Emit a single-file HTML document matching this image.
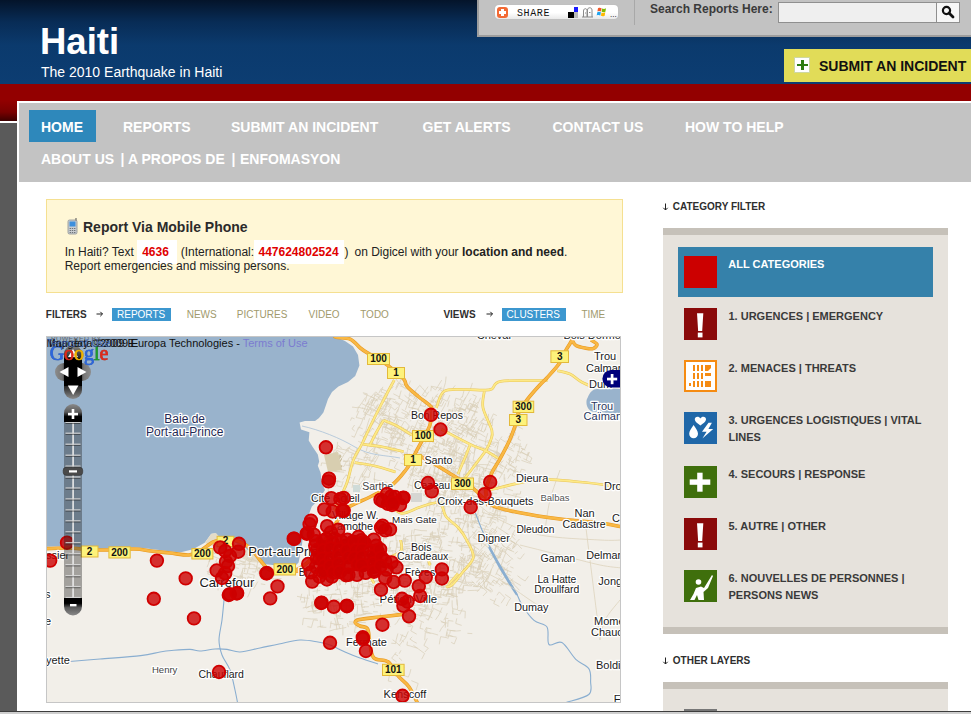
<!DOCTYPE html>
<html><head><meta charset="utf-8"><style>
html,body{margin:0;padding:0;width:971px;height:714px;overflow:hidden;background:#fff;}
.t{position:absolute;white-space:nowrap;font-family:"Liberation Sans",sans-serif;line-height:normal;}
.r{position:absolute;}
</style></head><body>
<div class="r" style="left:0px;top:0px;width:971px;height:84px;background:linear-gradient(to bottom,#04142a 0px,#082c56 22px,#0b3a6d 45px,#0c3d72 84px);"></div>
<div class="r" style="left:0px;top:84px;width:971px;height:37px;background:linear-gradient(to bottom,#930000 0px,#930000 16px,#7a0000 28px,#3c0000 37px);"></div>
<div class="r" style="left:0px;top:121px;width:17px;height:2px;background:#fff;"></div>
<div class="r" style="left:0px;top:123px;width:17px;height:588px;background:#5a5a5a;"></div>
<div class="t " style="left:40.0px;top:21.0px;font-size:36.5px;color:#fff;font-weight:bold;">Haiti</div>
<div class="t " style="left:41.0px;top:63.5px;font-size:14px;color:#fff;">The 2010 Earthquake in Haiti</div>
<div class="r" style="left:477px;top:0px;width:494px;height:37px;background:#c2c2c2;border-left:2px solid #9d9d9d;border-bottom:2px solid #9d9d9d;box-sizing:border-box;"></div>
<div class="r" style="left:495px;top:5px;width:123px;height:14px;background:linear-gradient(#fff 0%,#fff 55%,#e9e9e9 100%);border-radius:4px;box-shadow:0 0 1px #aaa;"></div>
<div class="r" style="left:497px;top:7px;width:11px;height:11px;background:#f26a35;border-radius:3px;"></div>
<div class="r" style="left:501px;top:9px;width:3px;height:7px;background:#fff"></div>
<div class="r" style="left:499px;top:11px;width:7px;height:3px;background:#fff"></div>
<div class="t " style="left:517.0px;top:8.2px;font-size:10px;color:#111;font-family:'Liberation Mono';letter-spacing:0.6px;">SHARE</div>
<div class="r" style="left:568px;top:12px;width:6px;height:6px;background:#000;"></div>
<div class="r" style="left:574px;top:7px;width:4px;height:5px;background:#1b1bff;"></div>
<div class="r" style="left:574px;top:12px;width:4px;height:6px;background:#bbb;"></div>
<svg class="r" style="left:581px;top:6px" width="13" height="12" viewBox="0 0 13 12"><path d="M2.5,11 V5 C2.5,2 6,2 6,4.5 V11 M6.5,11 V4 C6.5,1 11,1 11,4 V11 M1,11 H12 M4,7 H5 M8,6.5 H9.5" fill="none" stroke="#8a8a8a" stroke-width="1"/></svg><svg class="r" style="left:596px;top:6px" width="12" height="12" viewBox="0 0 12 12"><path d="M2,2.2 C3.5,1.4 4.5,1.6 5.6,2.2 L5,5.6 C3.9,5 2.9,4.8 1.4,5.6Z" fill="#f0582a"/><path d="M6.2,2.4 C7.3,3 8.4,3.1 10,2.3 L9.4,5.7 C7.9,6.5 6.8,6.3 5.6,5.8Z" fill="#7fba00"/><path d="M1.3,6.2 C2.8,5.4 3.8,5.6 4.9,6.2 L4.3,9.6 C3.2,9 2.2,8.8 0.7,9.6Z" fill="#22a4ef"/><path d="M5.5,6.4 C6.6,7 7.7,7.1 9.3,6.3 L8.7,9.7 C7.2,10.5 6.1,10.3 4.9,9.8Z" fill="#ffb900"/></svg><div class="t " style="left:610.0px;top:9.8px;font-size:8px;color:#000;">...</div>
<div class="r" style="left:634px;top:0px;width:1px;height:25px;background:#a8a8a8;"></div>
<div class="t " style="left:650.0px;top:2.1px;font-size:12px;color:#3a3a3a;font-weight:bold;">Search Reports Here:</div>
<div class="r" style="left:778px;top:2px;width:159px;height:21px;background:#efefef;border:1px solid #8f8f8f;box-sizing:border-box;"></div>
<div class="r" style="left:936px;top:2px;width:24px;height:21px;background:#f7f7f7;border:1px solid #8f8f8f;box-sizing:border-box;"></div>
<svg class="r" style="left:941px;top:5px" width="14" height="14" viewBox="0 0 14 14"><circle cx="5.5" cy="5.5" r="3.6" fill="none" stroke="#111" stroke-width="2.2"/><path d="M8 8 L12 12" stroke="#111" stroke-width="2.8" stroke-linecap="round"/></svg>
<div class="r" style="left:784px;top:49px;width:187px;height:33px;background:#e1dc58;"></div>
<div class="r" style="left:794px;top:57px;width:16px;height:16px;background:#fff;box-shadow:0 0 0 1px #cfd8a0 inset;"></div>
<div class="r" style="left:801.3px;top:60px;width:2.4px;height:10px;background:#2e7d12;"></div>
<div class="r" style="left:797px;top:63.8px;width:11px;height:2.4px;background:#2e7d12;"></div>
<div class="t " style="left:819.0px;top:58.0px;font-size:14px;color:#111;font-weight:bold;">SUBMIT AN INCIDENT</div>
<div class="r" style="left:17px;top:101px;width:954px;height:610px;background:#fff;"></div>
<div class="r" style="left:19px;top:103px;width:952px;height:79px;background:#c3c3c3;"></div>
<div class="r" style="left:29px;top:110px;width:67px;height:32px;background:#2e88bb;"></div>
<div class="t " style="left:41.0px;top:119.3px;font-size:14px;color:#fff;font-weight:bold;">HOME</div>
<div class="t " style="left:123.0px;top:119.3px;font-size:14px;color:#fff;font-weight:bold;">REPORTS</div>
<div class="t " style="left:231.0px;top:119.3px;font-size:14px;color:#fff;font-weight:bold;">SUBMIT AN INCIDENT</div>
<div class="t " style="left:422.5px;top:119.3px;font-size:14px;color:#fff;font-weight:bold;">GET ALERTS</div>
<div class="t " style="left:552.5px;top:119.3px;font-size:14px;color:#fff;font-weight:bold;">CONTACT US</div>
<div class="t " style="left:685.0px;top:119.3px;font-size:14px;color:#fff;font-weight:bold;">HOW TO HELP</div>
<div class="t " style="left:41.0px;top:151.3px;font-size:14px;color:#fff;font-weight:bold;transform-origin:left;">ABOUT US</div>
<div class="t " style="left:120.5px;top:151.3px;font-size:14px;color:#fff;font-weight:bold;transform-origin:left;">|</div>
<div class="t " style="left:128.0px;top:151.3px;font-size:14px;color:#fff;font-weight:bold;transform-origin:left;">A PROPOS DE</div>
<div class="t " style="left:231.5px;top:151.3px;font-size:14px;color:#fff;font-weight:bold;transform-origin:left;">|</div>
<div class="t " style="left:240.0px;top:151.3px;font-size:14px;color:#fff;font-weight:bold;transform-origin:left;">ENFOMASYON</div>
<div class="r" style="left:46px;top:199px;width:577px;height:94px;background:#fff7d6;border:1px solid #f5e091;box-sizing:border-box;"></div>
<svg class="r" style="left:66px;top:218px" width="13" height="17" viewBox="0 0 13 17"><rect x="2" y="2" width="9" height="14" rx="1.5" fill="#c9cdd0" stroke="#8b9096" stroke-width="0.8"/><rect x="3.5" y="3.5" width="6" height="5" fill="#3d8fdc"/><g fill="#6f757b"><rect x="3.6" y="10" width="1.4" height="1"/><rect x="5.8" y="10" width="1.4" height="1"/><rect x="8" y="10" width="1.4" height="1"/><rect x="3.6" y="12" width="1.4" height="1"/><rect x="5.8" y="12" width="1.4" height="1"/><rect x="8" y="12" width="1.4" height="1"/><rect x="3.6" y="14" width="1.4" height="1"/><rect x="5.8" y="14" width="1.4" height="1"/><rect x="8" y="14" width="1.4" height="1"/></g><rect x="9.5" y="0" width="1" height="2.5" fill="#555"/></svg>
<div class="t " style="left:83.0px;top:218.9px;font-size:14px;color:#2b2b2b;font-weight:bold;">Report Via Mobile Phone</div>
<div class="r" style="left:137px;top:240px;width:40px;height:24px;background:#fff;"></div>
<div class="r" style="left:254px;top:240px;width:90px;height:24px;background:#fff;"></div>
<div class="t " style="left:64.7px;top:244.7px;font-size:12px;color:#222;">In Haiti? Text</div>
<div class="t " style="left:142.2px;top:244.7px;font-size:12px;color:#e00000;font-weight:bold;">4636</div>
<div class="t " style="left:180.7px;top:244.7px;font-size:12px;color:#222;">(International:</div>
<div class="t " style="left:258.5px;top:244.7px;font-size:12px;color:#e00000;font-weight:bold;">447624802524</div>
<div class="t " style="left:344.5px;top:244.7px;font-size:12px;color:#222;">)</div>
<div class="t " style="left:354.5px;top:244.7px;font-size:12px;color:#222;">on Digicel with your</div>
<div class="t " style="left:462.0px;top:244.7px;font-size:12px;color:#222;font-weight:bold;">location and need</div>
<div class="t " style="left:564.0px;top:244.7px;font-size:12px;color:#222;">.</div>
<div class="t " style="left:64.7px;top:259.2px;font-size:12px;color:#222;">Report emergencies and missing persons.</div>
<div class="t " style="left:45.8px;top:309.1px;font-size:10px;color:#2e2e2e;font-weight:bold;">FILTERS</div>
<svg class="r" style="left:94px;top:309px" width="10" height="10"><path d="M2.5,5 H8.5 M6.3,2.8 L8.5,5 L6.3,7.2" fill="none" stroke="#222" stroke-width="1"/></svg><div class="r" style="left:112px;top:308px;width:59px;height:13px;background:#3c97cf;"></div>
<div class="t " style="left:117.0px;top:309.1px;font-size:10px;color:#fff;">REPORTS</div>
<div class="t " style="left:186.7px;top:309.1px;font-size:10px;color:#a19a6c;">NEWS</div>
<div class="t " style="left:236.8px;top:309.1px;font-size:10px;color:#a19a6c;">PICTURES</div>
<div class="t " style="left:308.5px;top:309.1px;font-size:10px;color:#a19a6c;">VIDEO</div>
<div class="t " style="left:360.2px;top:309.1px;font-size:10px;color:#a19a6c;">TODO</div>
<div class="t " style="left:443.4px;top:309.1px;font-size:10px;color:#2e2e2e;font-weight:bold;">VIEWS</div>
<svg class="r" style="left:484px;top:309px" width="10" height="10"><path d="M2.5,5 H8.5 M6.3,2.8 L8.5,5 L6.3,7.2" fill="none" stroke="#222" stroke-width="1"/></svg><div class="r" style="left:502px;top:308px;width:64px;height:13px;background:#3c97cf;"></div>
<div class="t " style="left:506.6px;top:309.1px;font-size:10px;color:#fff;">CLUSTERS</div>
<div class="t " style="left:581.4px;top:309.1px;font-size:10px;color:#a19a6c;">TIME</div>
<svg class="r" style="left:660px;top:200px" width="10" height="12"><path d="M5.5,3.5 V10 M3.3,7.8 L5.5,10 L7.7,7.8" fill="none" stroke="#222" stroke-width="1"/></svg><div class="t " style="left:672.8px;top:201.0px;font-size:10px;color:#2e2e2e;font-weight:bold;">CATEGORY FILTER</div>
<div class="r" style="left:663px;top:228px;width:285px;height:406px;background:#e6e2dc;"></div>
<div class="r" style="left:663px;top:228px;width:285px;height:7px;background:#c6c1b9;"></div>
<div class="r" style="left:663px;top:627px;width:285px;height:7px;background:#c6c1b9;"></div>
<div class="r" style="left:678px;top:247px;width:255px;height:50px;background:#3581aa;"></div>
<div class="r" style="left:684px;top:256px;width:33px;height:32px;background:#cc0000;"></div>
<div class="t " style="left:728.3px;top:258.0px;font-size:11px;color:#fff;font-weight:bold;">ALL CATEGORIES</div>
<div class="r" style="left:684px;top:308px;width:33px;height:32px;background:#8a0a0a"><svg width="33" height="32" viewBox="0 0 33 32"><path d="M13,5.3 L19.3,5.3 L18.2,23 L14.1,23Z" fill="#fff"/><rect x="13.8" y="24.6" width="4.7" height="4.8" fill="#fff"/></svg></div>
<div class="t " style="left:728.5px;top:310.2px;font-size:11px;color:#3a3a3a;font-weight:bold;">1. URGENCES | EMERGENCY</div>
<div class="r" style="left:684px;top:360px;width:33px;height:32px;background:#f58b12"><svg width="33" height="32" viewBox="0 0 33 32"><rect x="2" y="2" width="29" height="28" fill="#fff"/><g fill="#f58b12"><rect x="9" y="5" width="2" height="6"/><rect x="13" y="5" width="2" height="6"/><rect x="17" y="5" width="2" height="6"/><path d="M21 5h6v3l-3 3h-3z"/><rect x="9" y="13" width="2" height="6"/><rect x="13" y="13" width="2" height="6"/><rect x="17" y="13" width="2" height="6"/><path d="M21 13h6v3h-6z"/><rect x="5" y="23" width="2" height="3"/><rect x="9" y="21" width="2" height="6"/><rect x="13" y="21" width="2" height="6"/><rect x="17" y="21" width="2" height="6"/><path d="M21 21h6v6h-6z"/></g></svg></div>
<div class="t " style="left:728.5px;top:362.2px;font-size:11px;color:#3a3a3a;font-weight:bold;">2. MENACES | THREATS</div>
<div class="r" style="left:684px;top:412px;width:33px;height:32px;background:#1f67a8"><svg width="33" height="32" viewBox="0 0 33 32"><path d="M16.4 6.5c-1.5-3-6-2.2-5.6 1.2c0.3 2.2 3 3.8 5.6 5.8c2.6-2 5.3-3.6 5.6-5.8c0.4-3.4-4.1-4.2-5.6-1.2z" fill="#fff"/><path d="M9.6 13c-2.4 3.6-4.4 6.3-4.4 8.8a4.4 4.4 0 0 0 8.8 0c0-2.5-2-5.2-4.4-8.8z" fill="#fff"/><path d="M24.5 10.8l-6.5 9h4.6l-4.2 6.7l10.8-9.6h-4.8l3.5-6.1z" fill="#fff"/></svg></div>
<div class="t " style="left:728.5px;top:414.2px;font-size:11px;color:#3a3a3a;font-weight:bold;">3. URGENCES LOGISTIQUES | VITAL</div>
<div class="t " style="left:728.5px;top:430.8px;font-size:11px;color:#3a3a3a;font-weight:bold;">LINES</div>
<div class="r" style="left:684px;top:466px;width:33px;height:32px;background:#3f6f0c"><svg width="33" height="32" viewBox="0 0 33 32"><rect x="13.2" y="6.7" width="5.4" height="19" fill="#fff"/><rect x="5.7" y="13.4" width="20.6" height="5.4" fill="#fff"/></svg></div>
<div class="t " style="left:728.5px;top:468.2px;font-size:11px;color:#3a3a3a;font-weight:bold;">4. SECOURS | RESPONSE</div>
<div class="r" style="left:684px;top:518px;width:33px;height:32px;background:#8a0a0a"><svg width="33" height="32" viewBox="0 0 33 32"><path d="M13,5.3 L19.3,5.3 L18.2,23 L14.1,23Z" fill="#fff"/><rect x="13.8" y="24.6" width="4.7" height="4.8" fill="#fff"/></svg></div>
<div class="t " style="left:728.5px;top:520.2px;font-size:11px;color:#3a3a3a;font-weight:bold;">5. AUTRE | OTHER</div>
<div class="r" style="left:684px;top:570px;width:33px;height:32px;background:#3f6f0c"><svg width="33" height="32" viewBox="0 0 33 32"><path d="M28 5l-8 13l-3-1.5l-5 1.5l-2.5 6l-3.5 6h4.5l2.5-5l1.5 5h5.5l-0.5-8l4.5-4l5-12z" fill="#fff"/><circle cx="14.5" cy="12" r="2.8" fill="#fff"/></svg></div>
<div class="t " style="left:728.5px;top:572.2px;font-size:11px;color:#3a3a3a;font-weight:bold;">6. NOUVELLES DE PERSONNES |</div>
<div class="t " style="left:728.5px;top:588.8px;font-size:11px;color:#3a3a3a;font-weight:bold;">PERSONS NEWS</div>
<svg class="r" style="left:660px;top:654px" width="10" height="12"><path d="M5.5,3.5 V10 M3.3,7.8 L5.5,10 L7.7,7.8" fill="none" stroke="#222" stroke-width="1"/></svg><div class="t " style="left:672.8px;top:654.8px;font-size:10px;color:#2e2e2e;font-weight:bold;">OTHER LAYERS</div>
<div class="r" style="left:663px;top:682px;width:285px;height:29px;background:#e6e2dc;"></div>
<div class="r" style="left:663px;top:682px;width:285px;height:7px;background:#c6c1b9;"></div>
<div class="r" style="left:684px;top:709px;width:33px;height:2px;background:#777;"></div>
<div class="r" style="left:0px;top:711px;width:971px;height:1px;background:#3d3d3d;"></div>
<div class="r" style="left:0px;top:712px;width:971px;height:2px;background:#cfcfcf;"></div>
<div class="r" style="left:46px;top:336px;width:575px;height:367px;overflow:hidden;background:#f2efe9;"><svg width="575" height="367" viewBox="0 0 575 367" style="position:absolute;left:0;top:0;font-family:'Liberation Sans',sans-serif">
<g transform="translate(-46,-336)">
<path d="M40.0,330.0 L334.0,330.0 L334.0,336.0 L345.0,341.0 L353.0,346.5 L358.0,355.0 L359.4,365.4 L355.2,376.0 L348.0,382.0 L338.4,386.4 L332.0,392.0 L328.0,399.0 L326.0,405.0 L323.4,412.6 L319.0,418.0 L315.0,421.0 L305.0,421.0 L299.6,422.4 L301.0,429.4 L309.4,432.2 L308.7,440.6 L312.2,446.2 L317.8,454.6 L319.2,461.6 L317.8,465.8 L320.6,472.8 L322.0,484.0 L325.0,490.0 L318.4,500.0 L311.8,506.5 L306.9,519.7 L303.0,535.0 L302.0,544.4 L298.6,562.5 L295.3,565.8 L272.3,565.0 L264.0,564.0 L254.0,559.2 L246.0,548.5 L232.0,541.0 L218.0,537.8 L215.4,533.2 L211.3,533.7 L204.7,542.7 L193.0,549.3 L180.0,552.6 L151.0,549.0 L134.0,547.0 L98.5,549.0 L79.6,547.0 L67.0,546.0 L40.0,547.0Z" fill="#99b3cc"/>
<path d="M594,389.5 C602,388 612,388.5 622,389 L622,413.5 C612,413 600,413 592,411.5 C586,409 585.5,401 587.5,398 C589,394 591,391 594,389.5Z" fill="#99b3cc"/>
<path d="M205,543 L211,534 L216,533 L222,540 L240,545 L255,555 L262,563 L250,562 L235,555 L220,549Z" fill="#e4dcc8"/>
<mask id="landmask"><rect x="0" y="0" width="1000" height="1000" fill="#fff"/><path d="M40.0,330.0 L334.0,330.0 L334.0,336.0 L345.0,341.0 L353.0,346.5 L358.0,355.0 L359.4,365.4 L355.2,376.0 L348.0,382.0 L338.4,386.4 L332.0,392.0 L328.0,399.0 L326.0,405.0 L323.4,412.6 L319.0,418.0 L315.0,421.0 L305.0,421.0 L299.6,422.4 L301.0,429.4 L309.4,432.2 L308.7,440.6 L312.2,446.2 L317.8,454.6 L319.2,461.6 L317.8,465.8 L320.6,472.8 L322.0,484.0 L325.0,490.0 L318.4,500.0 L311.8,506.5 L306.9,519.7 L303.0,535.0 L302.0,544.4 L298.6,562.5 L295.3,565.8 L272.3,565.0 L264.0,564.0 L254.0,559.2 L246.0,548.5 L232.0,541.0 L218.0,537.8 L215.4,533.2 L211.3,533.7 L204.7,542.7 L193.0,549.3 L180.0,552.6 L151.0,549.0 L134.0,547.0 L98.5,549.0 L79.6,547.0 L67.0,546.0 L40.0,547.0Z" fill="#000"/></mask>
<path mask="url(#landmask)" d="M443.2,443.5 L446.6,444.3 L450.4,445.9 L453.5,447.1M404.4,421.1 L400.6,427.8 L404.5,429.2 L408.1,430.1M398.3,397.8 L401.8,399.6 L404.7,401.2 L409.3,404.1M462.3,412.4 L456.2,410.1M381.7,425.7 L376.6,422.4 L371.9,420.4M467.5,431.8 L473.3,435.6 L470.9,439.8 L475.4,442.5M395.2,401.4 L400.5,404.7 L402.8,400.3M443.4,448.7 L449.6,451.6M458.3,412.4 L459.4,407.5 L466.0,410.3M391.5,388.8 L393.6,386.1M386.3,426.8 L385.1,430.4M447.9,441.0 L454.2,443.9 L456.1,439.3 L453.1,437.9M455.8,441.9 L459.5,442.8 L465.0,445.4 L470.0,448.7M365.2,401.6 L367.3,393.9 L362.9,392.7M416.2,448.3 L412.8,455.3M470.8,430.0 L465.8,425.9M378.9,455.0 L376.8,459.2 L373.4,465.2 L369.2,470.9M414.1,397.1 L417.7,399.5 L413.5,406.0M427.8,448.7 L426.1,452.4 L423.5,458.1M401.5,433.9 L399.3,438.6M408.0,386.7 L410.6,380.6M410.2,421.4 L413.7,416.4M380.5,417.9 L379.2,424.0 L377.8,431.2 L377.8,435.3M381.6,418.7 L380.5,423.4 L387.3,425.4 L390.3,418.7M470.3,428.4 L472.0,425.9 L474.3,421.1 L476.5,417.0M398.8,420.2 L396.8,426.7M472.0,406.8 L474.2,401.1 L476.4,396.4 L472.6,394.6M439.4,461.1 L440.7,456.3M450.8,433.7 L444.4,429.4M484.4,417.4 L481.7,421.6M429.4,457.2 L432.4,453.6 L434.5,450.9M371.5,435.9 L377.2,438.2 L384.5,440.0 L387.7,441.5M447.8,459.6 L443.7,465.4 L438.9,462.3 L436.8,465.1M443.7,414.5 L441.0,412.4 L444.5,406.0 L446.0,402.7M466.6,411.8 L461.7,409.0M414.9,464.3 L413.0,470.1 L411.9,475.5M482.7,423.8 L488.1,424.9 L492.3,425.8 L492.7,418.7M459.6,406.0 L455.5,403.5M458.9,432.9 L457.5,439.5 L454.3,438.9 L452.2,444.9M475.9,434.3 L475.1,437.2 L468.1,433.7M394.9,461.6 L390.2,460.2 L388.9,466.3M419.6,427.8 L422.7,428.7 L428.7,429.8 L434.2,431.1M462.9,401.7 L467.3,395.1 L470.2,389.7 L472.4,382.9M460.4,452.7 L466.1,456.7 L469.0,458.1 L466.2,462.0M381.1,402.4 L378.8,407.2M371.6,418.8 L375.1,421.1 L378.3,423.8M365.3,433.0 L366.4,428.6 L368.1,422.7 L369.6,418.3M394.6,426.6 L395.7,423.3 L397.5,419.2 L402.4,421.2M400.4,452.4 L403.9,455.2M354.6,437.3 L351.5,436.0M468.5,416.5 L465.8,421.4 L463.5,424.9 L466.8,426.8M413.6,399.8 L414.9,396.4 L421.6,397.6M404.5,387.5 L399.8,385.9M412.8,450.8 L419.6,453.2M446.6,422.2 L449.6,416.0M377.1,398.6 L373.0,405.1M382.6,397.7 L379.3,396.1 L377.6,400.1 L370.7,396.3M386.0,427.1 L387.0,423.4 L388.8,416.6 L389.9,412.0M421.9,454.6 L420.3,458.9M460.1,405.4 L462.3,400.2 L455.8,398.2 L454.2,405.8M432.8,396.8 L431.6,401.6M435.4,404.5 L441.7,406.2 L444.1,401.3M450.8,390.8 L455.2,385.4M399.1,398.7 L399.8,395.8M379.0,394.6 L375.7,391.9 L373.2,394.5 L368.4,400.5M393.4,413.8 L397.3,415.8 L393.5,422.2M470.9,430.4 L472.6,427.6 L476.0,422.2M390.3,433.7 L384.1,431.7M464.0,426.1 L461.2,424.3 L458.1,427.6 L455.6,430.9M377.4,404.9 L376.0,407.8 L374.1,410.5 L371.5,413.1M391.5,430.3 L385.0,426.2M364.1,420.0 L365.6,413.5 L370.3,415.6 L374.6,416.5M358.9,410.9 L356.2,417.5 L362.6,418.9M443.5,460.9 L440.9,459.2 L438.1,464.7M432.1,427.9 L435.2,428.9 L433.9,433.4 L432.8,439.9M413.2,403.5 L416.7,404.3M419.7,449.9 L424.1,443.6M397.8,461.5 L394.3,467.9 L400.5,470.8M443.5,446.1 L444.7,440.9M456.1,441.0 L459.9,442.4M364.3,436.0 L362.7,441.9 L360.1,448.7M413.0,446.3 L409.0,444.7 L407.9,448.8 L406.4,456.1M464.0,423.8 L460.9,429.2M440.3,400.0 L444.8,394.1M450.0,422.1 L446.6,426.4 L444.0,429.9M380.6,403.9 L379.8,407.5 L378.5,410.4M366.7,444.6 L363.5,443.6 L358.2,441.3M387.9,394.4 L384.8,399.8M410.7,450.0 L406.5,448.2M421.0,419.6 L415.2,416.3 L411.3,413.0M367.3,445.1 L364.0,443.6M467.3,407.8 L473.2,410.9 L477.3,412.4M397.0,425.8 L394.2,433.2M384.3,401.4 L389.4,405.3 L394.9,410.1 L397.6,407.2M393.6,436.0 L392.2,439.5M422.5,395.0 L425.5,396.9 L428.8,391.6M420.2,447.2 L423.0,442.4 L425.0,436.7M385.6,406.9 L388.5,402.8 L390.8,398.2M392.6,401.3 L399.2,405.1M467.2,434.6 L468.8,431.9M443.8,393.6 L442.6,397.9 L440.4,404.1M421.6,401.3 L420.1,405.4 L425.4,406.6 L425.9,402.3M425.6,432.0 L422.4,437.5 L428.8,440.2M429.7,418.1 L432.7,412.4 L434.8,407.1 L430.4,404.9M386.0,448.4 L391.6,450.9M401.5,451.7 L398.8,450.0 L393.4,447.2 L389.9,453.8M472.6,433.8 L477.0,434.7 L475.9,439.7M397.5,412.3 L399.6,404.9M463.3,435.5 L460.3,439.5 L458.1,437.1M377.3,406.8 L378.3,403.8M451.9,432.0 L458.0,433.3 L462.0,433.5 L462.7,429.7M475.3,423.8 L477.9,419.7M417.5,397.8 L418.7,393.6M478.9,407.9 L473.7,404.6 L469.2,410.8M473.1,401.2 L476.2,403.5M437.0,440.2 L432.6,438.8 L425.5,437.0M470.9,426.2 L474.8,427.9 L472.2,432.1 L470.2,435.4M440.6,419.4 L438.2,417.4 L432.9,414.1 L427.4,410.2M439.1,458.2 L445.3,462.8 L448.8,464.8 L455.6,467.3M407.1,455.9 L410.9,457.0 L410.1,461.2 L405.7,460.7M370.8,404.0 L374.7,398.6 L369.7,396.2 L363.6,393.8M363.2,408.6 L357.8,407.0M489.2,426.1 L490.9,419.3 L493.4,413.9 L496.8,415.6M437.0,441.6 L442.2,444.1 L446.4,446.4 L451.1,440.5M381.0,448.2 L375.8,446.4 L372.7,451.7 L378.3,453.9M442.4,443.9 L444.8,440.0 L438.8,436.6 L433.8,434.8M421.1,404.3 L417.5,409.9M434.9,446.3 L438.3,447.2 L438.8,443.5 L443.9,444.7M407.1,462.5 L409.2,457.9M386.6,404.1 L387.9,398.2 L383.7,398.1M387.7,400.5 L383.9,406.9 L380.4,412.0 L384.0,414.3M392.1,436.6 L390.4,441.7 L388.5,446.4M460.0,426.5 L461.9,424.0M477.6,412.1 L472.5,410.8 L467.3,408.9 L469.0,404.2M374.8,445.7 L378.8,448.2 L383.2,450.5 L388.1,451.8M369.6,409.1 L374.4,410.7 L381.2,414.5 L382.6,411.1M365.3,431.1 L362.6,435.1M383.8,418.5 L381.1,422.5 L378.8,426.8M362.7,428.8 L358.5,427.1 L356.3,432.8 L354.3,437.2M427.9,416.6 L423.2,413.4M428.5,425.4 L433.8,428.4 L436.8,430.8M442.5,416.1 L439.6,421.4 L435.6,427.7 L429.7,424.9M454.3,407.2 L461.1,409.5M403.4,427.0 L400.6,431.7M406.8,403.6 L409.2,399.4 L404.5,395.2M474.9,430.7 L481.0,434.3 L485.6,437.1M378.1,401.0 L373.4,399.8 L371.4,405.2 L370.1,409.7M403.1,460.1 L406.2,452.8 L411.4,456.3 L415.3,458.6M478.8,445.6 L485.7,448.5 L489.0,449.8 L496.4,451.5M369.0,400.4 L365.9,406.0 L363.4,411.8 L366.9,413.5M456.7,440.3 L463.1,442.9M449.4,428.7 L454.8,431.0 L459.9,433.3 L464.3,435.9M413.7,428.1 L411.3,433.3 L409.3,436.9M465.7,426.5 L468.8,429.1M418.2,419.8 L416.6,423.4 L414.1,429.6 L412.6,432.7M418.3,463.6 L421.1,465.4M388.4,411.8 L390.7,407.6 L387.3,405.8M381.4,401.6 L384.7,394.6 L387.8,395.8M479.3,428.3 L476.5,433.5 L473.7,439.3M457.3,425.2 L451.7,423.3M440.3,415.5 L438.2,421.5 L441.5,422.5 L443.0,418.8M406.7,430.9 L402.5,436.2 L405.3,438.3 L402.4,441.3M370.0,429.2 L369.0,432.6M377.0,442.3 L375.4,446.9 L374.0,452.0M389.6,450.6 L397.3,452.5M448.9,416.7 L442.6,413.9 L439.6,412.9M462.4,429.2 L467.1,431.7 L472.1,435.3 L474.8,437.5M473.9,416.3 L475.3,411.7M452.0,429.5 L446.1,424.9M423.4,416.5 L424.5,412.1M402.6,456.4 L405.5,451.9M395.5,426.7 L392.4,433.6M440.2,388.6 L438.1,391.2M395.3,429.9 L400.9,434.3 L404.7,437.1M454.6,449.8 L451.1,455.3M396.4,432.6 L394.8,438.2 L391.1,437.4M373.0,428.0 L369.1,432.7M466.9,449.9 L461.8,456.0 L459.2,458.3M433.9,411.0 L431.0,410.2 L432.4,405.2 L437.5,405.9M454.2,448.1 L451.3,453.9M468.9,401.7 L471.1,398.3M448.8,432.2 L452.1,427.7M462.3,397.4 L464.1,390.1 L457.9,389.4M377.2,452.0 L374.0,457.1 L370.4,463.9 L368.2,470.1M362.1,407.8 L369.4,410.4M423.8,419.0 L422.9,423.0M383.2,417.4 L389.8,418.8 L389.7,424.8 L396.2,424.9M429.3,436.1 L423.5,434.5 L423.9,430.9M424.8,443.9 L429.0,437.4M381.7,436.9 L388.0,439.6M406.2,389.2 L403.5,387.4 L398.1,381.9 L394.4,376.8M466.2,437.3 L467.2,434.3 L468.5,429.5 L461.8,427.3M414.5,456.9 L409.1,453.9M420.7,429.7 L425.1,431.3 L431.0,432.4M468.9,412.2 L470.9,405.1M416.8,404.1 L411.5,400.4 L408.4,397.9 L411.9,393.3M421.9,447.3 L420.5,452.0 L425.2,452.4 L429.8,452.6M400.4,463.1 L406.2,464.8M406.7,431.5 L408.8,426.2M456.4,450.2 L452.9,456.4 L449.1,462.0M382.5,401.6 L381.3,404.3M358.2,407.9 L362.5,401.9 L365.4,397.5M394.9,444.0 L398.4,437.9M382.7,420.0 L380.3,425.4 L377.9,429.3M391.7,433.1 L397.4,434.3 L398.1,428.7M350.5,420.6 L351.7,417.7 L354.5,418.8M404.5,433.9 L406.4,430.7 L409.9,426.5 L404.8,421.1M470.6,443.9 L463.9,441.4M395.6,389.8 L397.8,386.0 L399.7,382.5 L401.7,377.1M374.3,394.8 L380.3,398.4M465.1,410.2 L466.9,407.7 L469.6,402.9 L475.5,407.4M452.4,442.7 L450.9,445.9 L448.7,453.3 L454.2,455.8M369.0,409.3 L366.7,413.0 L365.2,416.1M384.7,442.7 L390.3,444.5 L396.1,446.2M396.1,416.7 L394.5,420.9 L389.8,418.1M411.4,400.5 L408.5,407.3 L415.6,408.9M436.3,447.1 L433.0,445.7 L430.9,451.6M356.9,412.3 L358.3,407.8 L352.0,407.1M443.6,439.3 L441.7,444.8M453.9,455.2 L449.3,453.7 L444.0,452.5M452.0,444.7 L446.8,441.9 L449.3,437.5M393.4,393.8 L399.4,396.9 L401.2,390.5M457.5,437.9 L454.9,441.7M442.7,389.0 L438.4,387.7 L431.4,386.2 L430.8,391.2M462.3,396.2 L460.4,398.7M416.8,418.9 L418.3,414.4 L419.0,410.9M433.6,427.0 L432.1,430.5 L429.5,436.0M386.6,425.3 L381.5,421.3 L384.2,418.9 L388.2,425.1M476.2,432.6 L469.8,430.6 L463.3,428.8M439.8,421.0 L442.4,415.1 L436.6,412.5M465.1,412.5 L463.7,415.4M425.5,409.1 L421.9,416.1M433.5,449.5 L427.2,447.7 L426.5,451.9 L432.7,452.0M369.8,407.4 L367.7,412.8M447.3,423.0 L451.0,417.7M449.5,431.7 L443.4,429.5M393.5,430.4 L390.4,429.3 L382.9,426.7 L381.8,433.2M375.2,436.2 L373.5,438.8 L369.8,443.6M419.7,413.8 L423.4,416.3M460.2,407.3 L458.4,414.2 L452.3,413.0 L453.0,408.2M453.0,432.1 L459.7,435.7 L464.3,429.5 L458.9,425.7M454.8,449.6 L453.1,455.6 L456.3,455.9M397.2,438.4 L401.4,441.4 L400.0,444.4 L402.7,446.2M472.4,404.4 L470.4,409.2M373.8,417.7 L376.8,410.8 L381.3,404.4 L383.4,401.9M385.6,415.6 L382.3,414.0 L385.0,408.5 L387.2,402.2M369.9,414.7 L372.0,409.3M452.7,421.3 L450.8,424.9M405.4,409.8 L406.7,405.9 L409.7,398.9M437.9,393.7 L434.7,398.1 L429.7,404.2 L425.8,409.2M389.7,427.7 L392.9,428.6 L396.1,428.9 L399.7,429.1M372.2,399.0 L368.8,405.5 L365.8,412.1 L363.9,415.1M388.4,447.7 L389.5,443.0 L396.3,444.7 L403.8,445.1M390.9,430.8 L392.3,425.5M391.6,419.2 L387.7,416.3 L384.3,413.7 L386.6,411.7M371.4,427.8 L374.2,429.7M395.8,388.2 L398.0,383.0 L401.8,384.3 L404.9,385.5M390.8,454.8 L392.5,450.5 L396.8,452.5M369.2,401.4 L366.8,405.1M376.7,456.2 L371.8,462.0M378.7,398.9 L385.2,401.5 L391.8,405.4M416.0,390.1 L413.6,396.2 L409.0,395.3 L411.4,388.8M483.0,424.2 L481.0,431.4M426.2,400.1 L424.0,404.0M391.3,399.6 L385.6,398.2M396.6,442.6 L398.5,437.8 L400.8,433.8 L402.5,429.9M424.6,456.6 L429.5,458.1 L426.8,463.8M431.5,431.9 L436.1,433.0 L440.4,433.2 L448.0,433.9M484.3,431.3 L487.0,424.9 L488.1,419.9 L488.5,413.9M461.2,415.7 L466.9,417.0 L466.6,423.0M422.3,430.3 L427.1,432.2 L432.5,434.7M441.4,396.0 L443.9,392.2 L439.9,389.5 L441.3,386.7M482.3,419.8 L479.1,423.6M459.8,447.0 L457.8,450.8M465.8,397.4 L462.7,403.6 L459.6,410.2M432.8,402.7 L433.9,399.3M374.1,443.6 L369.4,442.5 L366.9,448.1 L366.3,451.1M400.8,446.1 L404.5,439.7 L399.2,437.4M428.1,386.6 L426.2,389.4 L421.9,395.6M472.7,416.6 L469.3,423.0M362.9,438.1 L366.7,433.0 L370.2,426.3M417.6,409.5 L423.0,413.0 L428.3,416.2M487.8,433.1 L485.9,439.3 L485.0,445.2 L491.4,446.7M448.5,409.4 L452.8,413.0M454.7,451.5 L461.6,455.0 L465.4,456.6M436.1,443.8 L432.4,442.4M386.1,447.7 L391.9,449.9M477.8,421.3 L472.5,419.1 L469.8,423.2M470.3,403.6 L477.6,406.0 L475.0,412.1 L471.8,417.6M472.0,405.7 L476.3,407.6 L478.1,403.4 L480.6,397.7M473.8,424.0 L469.6,430.0 L465.8,426.8 L470.1,422.1M387.9,394.3 L381.0,392.0 L382.8,386.9M420.8,414.7 L417.4,413.0 L418.7,409.4 L411.2,407.7M447.6,406.8 L449.2,400.5M433.7,402.4 L429.7,400.6M364.6,435.4 L368.2,429.7M394.8,426.0 L392.5,430.1 L397.8,432.4 L400.7,433.8M464.8,410.3 L461.5,409.2 L459.7,412.8M427.3,403.9 L431.4,406.4 L427.9,410.2M381.7,413.2 L378.0,417.8 L374.8,421.2 L371.9,425.5M460.1,408.6 L465.3,410.0 L467.0,405.1 L463.7,404.4M442.6,399.5 L439.6,404.3 L433.9,400.5M449.1,433.8 L456.1,435.6M413.1,416.5 L407.9,414.0M398.1,433.3 L401.8,436.0M425.4,424.8 L421.3,422.8M389.8,438.4 L392.1,434.5 L386.4,430.1M426.7,439.0 L422.4,435.6 L416.7,431.6 L411.3,427.9M425.9,426.5 L419.1,425.0M451.6,421.9 L453.6,417.1 L454.8,412.1 L455.1,404.8M469.2,427.5 L466.3,433.5 L461.5,430.4 L454.6,427.2M434.3,451.0 L437.5,453.6 L433.9,457.4M414.4,416.0 L418.7,417.3 L425.1,420.2M386.1,418.9 L383.9,426.5 L388.1,428.6 L391.7,430.6M430.9,439.1 L428.2,437.5M487.2,424.1 L490.1,425.1 L493.8,418.5M366.8,403.6 L371.0,404.9 L375.2,406.3M458.6,417.0 L454.0,415.9 L453.1,422.6M443.1,391.0 L444.0,387.5 L445.5,382.4 L446.1,376.6M397.6,418.2 L391.4,416.7 L385.2,415.5 L378.1,414.7M448.1,437.7 L446.9,441.9 L446.2,446.0M433.7,447.9 L437.1,441.2M428.1,423.3 L431.3,418.4 L433.0,414.9 L437.1,417.9M477.0,444.1 L474.9,450.6 L473.4,453.6 L470.8,451.7M435.2,403.3 L436.6,400.6M423.0,418.0 L421.0,421.3 L417.8,418.8 L413.0,414.3M358.2,429.5 L361.6,422.8 L363.6,417.0M415.7,413.1 L410.1,410.1 L407.6,416.8M449.9,395.0 L447.1,401.3 L441.9,398.4 L435.4,396.0M424.0,461.8 L426.7,456.5 L429.7,450.3M458.1,438.3 L452.1,434.7 L446.7,432.1M379.1,439.7 L373.9,437.3 L367.2,434.7M417.3,436.8 L420.0,430.3 L421.8,424.4 L418.2,422.8M433.5,438.5 L427.6,434.0 L425.1,437.9 L420.0,443.9M420.6,425.7 L418.8,429.5 L411.9,425.8 L409.5,432.1M406.3,417.3 L407.8,412.7 L401.7,409.3M387.6,446.3 L391.1,447.1 L392.5,440.5 L394.5,434.1M468.6,426.2 L461.3,424.2 L457.8,422.4 L459.9,418.8M378.9,393.2 L381.0,388.8 L387.6,391.5 L391.0,385.4M431.1,408.2 L436.5,409.8 L433.9,415.1 L438.0,417.7M354.7,431.0 L352.0,428.8 L354.6,425.0M446.6,415.2 L449.3,409.6 L453.5,410.8M365.2,444.4 L371.4,446.6 L372.9,442.4M479.4,434.0 L475.4,432.4 L469.0,428.7M370.8,442.2 L375.7,446.0M460.9,415.8 L454.4,413.1 L457.8,407.5M395.5,399.7 L389.3,398.1 L389.0,401.1M380.2,413.6 L374.5,409.8 L368.7,407.0 L362.0,403.7M382.3,395.8 L375.2,393.9 L373.9,398.1 L371.4,403.6M395.8,460.4 L391.7,458.0M433.5,463.3 L436.1,458.7M375.6,407.6 L379.1,408.4 L386.7,409.4M388.5,418.3 L386.6,423.7 L385.7,427.4 L382.5,426.8M376.7,443.0 L378.8,436.3M397.9,409.4 L394.9,416.2 L400.7,417.9 L405.0,419.0M486.0,428.9 L483.7,432.2 L477.7,429.1 L481.9,422.6M451.6,426.5 L448.2,424.7 L451.1,421.2 L455.6,416.6M359.7,435.0 L364.2,436.7M409.5,434.8 L402.9,431.7M419.6,443.3 L424.8,447.4M451.7,453.9 L452.6,450.4M482.2,418.9 L485.9,420.6M382.1,416.5 L385.3,409.7 L387.8,402.6 L384.7,400.9M378.2,413.4 L381.9,407.9 L384.4,405.0 L388.3,401.3M395.9,425.2 L397.5,418.4M418.4,394.9 L415.3,400.3 L412.6,407.7 L412.0,410.9M430.9,386.3 L435.5,389.9 L437.5,386.8 L441.7,380.2M452.8,455.7 L445.4,453.8 L442.3,453.5M374.3,407.4 L379.2,410.4 L376.0,415.8 L373.5,422.6M414.6,391.5 L419.7,385.4 L422.2,387.8 L426.7,393.5M406.7,444.5 L401.0,442.9 L402.2,440.1 L403.4,433.8M380.5,439.8 L376.4,445.2 L371.1,450.1 L368.3,452.4M408.0,418.6 L404.6,417.1 L406.3,414.5 L401.5,412.5M484.0,423.7 L481.1,422.7M387.9,448.1 L380.6,446.6M430.3,413.5 L425.9,411.5 L422.8,409.4M467.5,413.8 L471.5,408.8 L474.2,405.7 L477.9,402.1M392.8,431.4 L390.5,435.2 L394.4,437.0 L401.4,439.0M416.6,392.7 L414.9,395.5 L417.9,397.0 L420.9,398.5M396.5,425.5 L393.4,423.1 L389.2,420.5M501.8,509.4 L502.2,506.2M457.8,506.1 L450.6,505.4M460.3,485.0 L457.2,484.1M436.9,514.9 L440.1,515.7M498.4,515.2 L494.6,514.7 L495.6,510.6 L501.9,511.3M471.2,482.8 L478.7,483.3M487.3,485.8 L484.0,484.5M491.4,497.7 L492.5,492.5M454.7,496.3 L452.6,501.1 L451.4,505.3M429.0,485.2 L435.6,486.6 L436.0,478.9M482.3,485.7 L482.3,490.0 L485.9,490.4M467.3,504.2 L459.4,504.3 L460.0,509.9 L460.4,516.3M448.2,495.1 L446.9,499.8M441.9,515.5 L440.1,521.2M460.9,522.0 L458.5,528.3 L455.9,532.6M474.6,524.1 L475.4,518.6 L476.1,514.6 L468.2,514.1M471.6,465.4 L476.6,466.2 L483.4,467.4M469.6,494.8 L463.9,493.3 L463.5,497.5M494.5,484.7 L493.6,488.4M437.1,501.8 L437.6,495.5 L438.7,491.3 L433.5,490.8M508.7,507.2 L507.4,510.4 L513.5,513.9M438.8,491.0 L435.1,489.4 L431.3,487.6 L429.3,493.8M497.8,489.8 L491.6,487.9M455.5,476.8 L461.8,477.9 L466.3,478.6M483.2,493.4 L484.3,486.0M442.4,512.3 L445.0,504.7M454.9,494.4 L455.8,491.1 L450.4,488.6 L452.9,482.3M501.0,497.3 L499.9,505.0M446.1,477.0 L445.2,483.2 L443.7,489.0M464.6,494.2 L457.4,494.5M470.4,496.9 L467.5,495.7M474.3,503.5 L474.8,498.7 L480.2,499.2 L480.1,506.8M460.3,488.6 L455.7,488.6 L456.4,494.5 L456.6,501.7M474.9,520.2 L478.0,521.3M482.6,471.2 L481.2,476.4 L485.1,476.8 L491.3,476.6M438.4,492.1 L434.5,490.8M454.5,482.5 L455.5,478.7M499.0,515.9 L506.1,516.3 L506.0,521.9M499.8,507.4 L503.5,507.9M484.6,504.1 L479.2,502.5 L475.9,502.0M473.8,487.7 L472.5,495.3 L477.2,496.6M454.9,518.5 L458.3,518.5 L459.3,525.7M506.3,500.4 L512.7,502.9 L514.1,499.5 L517.1,493.5M496.1,514.7 L499.7,515.9 L500.4,512.0M491.0,483.6 L492.5,480.4M435.1,477.2 L428.8,475.0 L421.9,471.9M448.5,517.9 L448.7,523.3 L447.8,529.3 L441.0,529.1M504.3,503.5 L508.7,505.2 L505.6,512.0 L501.2,510.6M451.8,483.9 L452.8,476.2M451.0,480.5 L448.6,487.1 L445.4,493.4 L441.3,491.4M454.0,492.3 L449.5,491.0M497.1,516.6 L504.5,519.3 L502.8,524.3 L500.8,528.6M495.4,497.8 L501.5,498.2M450.5,498.2 L451.3,490.4 L458.7,491.6M484.0,480.1 L478.2,478.6M491.2,481.8 L490.9,487.5 L490.2,493.3M464.0,475.7 L466.4,470.6M438.1,478.8 L443.3,479.1 L443.7,475.7 L439.2,475.7M425.7,496.6 L431.5,498.3M479.4,473.4 L479.7,479.2 L479.2,484.0 L479.2,487.1M429.6,484.3 L429.4,491.4 L435.8,490.6M455.5,484.9 L462.5,484.9M469.2,509.6 L468.7,517.1M499.5,511.2 L500.7,507.3 L497.8,505.8 L494.7,504.3M441.0,506.4 L437.0,505.7 L438.0,499.1 L438.2,491.8M483.0,509.1 L482.3,513.0M448.7,503.1 L450.5,497.9 L454.3,499.2 L458.2,500.5M433.7,511.8 L429.1,510.3 L427.2,515.3M430.6,498.9 L432.4,494.8 L434.5,491.7 L438.4,494.8M450.1,515.8 L448.8,521.9 L441.3,521.4M432.3,504.8 L427.6,504.2M454.6,513.0 L456.3,506.3 L463.3,506.7 L470.9,506.8M481.3,479.4 L480.0,482.3 L478.0,488.6M490.1,500.1 L482.6,500.0 L476.9,498.9 L473.3,497.8M466.1,474.0 L466.1,467.2 L466.7,464.1 L466.8,460.9M497.2,510.4 L497.2,516.5M429.2,506.9 L429.8,502.8 L432.1,496.6M481.5,467.7 L487.8,468.8 L493.3,470.4 L500.5,472.4M489.3,512.2 L494.5,514.4 L495.8,509.6 L497.9,502.3M462.5,477.7 L461.1,483.8 L454.0,480.6 L449.4,479.0M459.4,483.2 L463.6,485.2 L461.1,489.1 L466.4,494.1M509.2,502.9 L510.9,498.1 L515.7,499.9 L522.4,501.3M436.9,477.6 L438.1,470.7 L439.7,464.7 L440.3,457.5M463.7,518.9 L455.9,518.5 L454.9,524.9 L447.7,523.8M506.3,488.5 L513.0,490.8M426.7,487.4 L425.8,494.6 L422.8,493.9M473.3,486.7 L478.6,487.0 L483.3,487.7 L489.2,489.7M467.3,522.4 L467.2,527.8M477.8,523.2 L472.2,520.6M441.5,498.7 L436.8,497.3 L435.2,502.7 L433.5,506.1M484.2,511.6 L482.0,516.6 L478.8,515.2M488.1,514.6 L496.0,515.7M458.4,509.0 L458.0,513.5M453.5,483.4 L449.6,482.6 L443.6,481.8 L444.0,475.3M488.6,500.9 L494.6,503.0M450.5,468.1 L453.9,468.4 L453.8,474.2M463.4,477.8 L463.7,485.7M465.2,523.8 L460.4,522.4 L453.3,521.5M465.0,520.7 L464.5,523.8 L461.7,531.2 L468.2,532.7M468.6,523.4 L468.5,527.2M441.5,485.4 L442.6,478.7 L442.8,475.0 L442.4,467.9M435.1,480.5 L435.6,476.4M498.3,485.2 L498.1,488.6 L493.5,487.9M445.1,493.7 L445.4,489.9M458.3,467.5 L459.6,464.5 L463.5,459.0 L468.1,453.9M490.8,505.4 L490.0,509.5M500.7,508.3 L500.4,502.0M464.9,486.8 L458.6,486.0 L458.7,481.0M482.3,498.1 L480.8,501.2 L484.1,502.4 L486.0,497.5M429.9,499.5 L430.0,503.1 L429.6,509.0M505.7,507.1 L499.8,506.7M444.9,513.6 L439.7,513.4 L434.0,514.1M490.1,514.8 L483.4,512.7M472.6,495.5 L464.6,495.5 L465.5,488.9M504.2,487.2 L503.6,492.6M445.0,488.5 L443.6,493.8 L442.2,500.0 L442.0,504.5M477.3,470.3 L477.7,464.6 L484.9,464.6 L490.3,465.2M459.4,468.1 L460.3,461.4 L462.3,453.8M445.6,476.5 L450.3,476.9M426.4,490.4 L422.0,488.8M466.7,468.3 L466.7,464.0M461.4,504.2 L463.0,500.1 L465.4,492.6M494.8,501.6 L493.9,509.0M473.7,483.6 L478.9,483.6 L480.5,475.8M473.9,482.3 L469.2,482.3 L465.3,482.1M473.9,517.6 L478.1,517.8M436.1,492.7 L440.2,493.6M451.0,509.7 L451.0,513.9 L456.9,513.3M439.2,488.3 L433.8,487.8 L428.9,488.3 L425.0,488.5M478.6,477.2 L483.3,479.4 L490.2,482.1 L497.6,483.5M440.4,494.0 L435.3,491.8 L429.9,490.4M480.5,521.9 L481.3,516.0 L484.7,516.1M497.1,493.2 L489.9,493.1 L489.5,490.0 L492.4,489.3M445.0,506.2 L444.9,511.5 L441.6,510.9 L441.2,518.7M438.8,498.7 L437.4,504.7M493.7,513.2 L492.5,517.5 L490.1,523.7M459.2,480.0 L457.1,486.8 L455.3,491.3 L458.8,492.8M458.8,488.7 L466.4,490.6 L473.6,491.7 L480.9,494.1M430.5,505.4 L431.4,501.5M458.6,502.8 L462.2,502.7 L468.6,502.9 L467.0,510.3M478.5,475.9 L471.6,474.3M482.1,490.9 L483.4,486.1M489.4,471.4 L488.7,479.1 L488.9,483.6 L489.6,487.6M443.6,496.7 L438.9,496.0M434.9,506.9 L434.2,510.9 L433.2,515.0 L432.4,519.7M445.7,486.3 L444.9,493.6M431.2,486.2 L429.8,490.5M484.8,472.3 L487.5,465.1 L489.4,461.8 L491.2,458.5M464.9,514.5 L472.1,514.8 L477.8,514.9 L478.3,509.5M483.6,522.5 L489.0,524.7 L490.9,518.1 L496.6,520.0M442.8,497.3 L448.6,500.1M482.8,469.3 L486.6,470.8M489.4,502.8 L489.6,498.3M486.0,484.8 L486.0,477.5M465.2,485.7 L469.5,487.7M496.2,486.9 L496.4,483.6 L490.5,482.8M504.0,479.7 L504.3,474.0M512.7,494.1 L520.2,494.1 L520.8,491.1M429.4,500.2 L426.9,506.2 L425.7,511.1M463.8,496.6 L459.2,495.6M482.2,497.3 L475.8,496.6 L469.1,496.9 L464.7,496.3M446.9,477.2 L449.1,472.0M493.5,507.4 L492.8,512.0M463.0,520.6 L468.1,521.9 L473.0,522.4 L472.7,528.4M504.8,477.5 L504.8,482.6M479.1,471.3 L480.1,468.0M483.2,475.6 L483.7,472.2 L483.7,468.0M443.5,481.4 L448.7,481.5 L456.5,481.1M457.6,517.9 L462.4,519.8M463.4,520.1 L463.8,514.9 L468.5,515.3 L467.7,520.8M474.2,515.9 L478.6,516.4 L478.3,521.5 L472.4,520.9M468.0,524.1 L467.9,530.3 L469.0,537.6 L470.3,543.9M459.0,484.8 L455.3,483.8M489.1,491.7 L490.5,487.1M436.2,492.8 L435.1,500.6M486.3,477.7 L484.4,484.0M465.3,523.0 L466.4,517.1 L468.5,511.0M428.3,489.7 L428.9,484.1M482.3,483.4 L478.2,481.5 L480.6,474.3M441.4,502.5 L444.0,495.1M451.6,486.8 L453.5,480.8 L454.4,476.5 L455.6,468.6M446.1,478.3 L446.9,474.6 L442.0,474.0M480.0,466.0 L473.2,464.3M438.2,494.1 L444.9,494.9 L443.5,502.4 L448.7,503.3M486.9,517.2 L493.3,517.7 L497.3,517.5 L498.1,522.1M475.1,489.5 L478.4,489.6M443.4,505.9 L450.3,507.0M445.2,495.9 L445.1,492.8 L445.3,484.9 L444.6,477.0M460.6,498.3 L462.7,491.4 L459.8,490.4M497.8,490.1 L498.6,486.6 L499.2,483.2M496.0,510.4 L497.2,507.4 L493.3,505.5M470.7,523.4 L471.5,517.3 L471.9,511.6M503.8,493.9 L509.9,494.9 L515.2,496.1 L522.6,498.3M458.6,470.9 L458.7,474.7 L453.8,475.4 L447.2,475.7M475.8,484.4 L483.2,484.9 L483.5,490.2 L480.5,489.8M477.4,499.8 L483.8,500.7 L487.1,501.0 L486.8,496.5M475.0,485.1 L474.2,489.1M491.5,495.1 L484.7,495.1M476.4,504.9 L478.1,499.3 L483.6,501.7 L490.6,503.7M452.6,472.8 L459.4,473.2 L459.5,479.9M420.9,476.5 L424.6,477.3M447.4,468.9 L447.9,463.6M423.7,475.0 L427.8,476.0M414.6,465.6 L412.5,469.6M433.9,473.3 L435.3,466.5 L442.8,467.5 L448.6,468.3M459.2,477.7 L456.8,485.3M476.2,464.9 L470.6,463.5M434.9,489.0 L433.5,496.0 L426.5,493.4M457.8,487.5 L453.1,485.6M419.4,470.3 L418.0,475.5M432.9,451.0 L437.5,451.4M465.5,457.9 L467.3,453.3 L468.4,447.8M427.1,449.5 L429.8,442.3M466.7,469.9 L467.1,464.1 L468.1,457.1M468.8,455.8 L467.2,460.8 L470.3,461.8M458.3,476.2 L456.1,480.2 L454.5,484.5 L457.6,485.3M418.4,483.3 L414.2,482.3M414.7,476.5 L409.3,474.0M442.0,476.0 L438.2,474.4 L433.7,472.5 L434.8,467.4M435.6,490.1 L434.1,494.3M430.0,483.6 L430.6,477.7M425.1,454.8 L418.5,452.8 L415.5,451.8M434.6,449.3 L428.8,446.9M460.7,453.7 L457.0,452.5 L452.6,450.1 L448.2,448.4M443.3,459.7 L447.0,460.5 L453.7,461.6 L454.2,454.2M470.3,460.2 L467.3,459.6 L467.8,452.7 L463.1,452.8M469.0,464.9 L468.1,471.0M445.0,480.6 L446.7,475.2 L448.4,467.8M433.4,485.1 L432.4,491.1 L432.1,495.3M447.2,490.9 L448.3,486.1 L448.9,480.0M468.2,474.8 L463.5,474.5 L463.8,480.1M417.3,467.9 L415.3,471.9M427.3,490.5 L427.7,487.5 L423.9,486.3M468.2,466.4 L466.6,470.8M439.8,448.2 L434.9,447.0M454.5,451.4 L455.7,447.1 L456.4,443.3M419.3,479.3 L424.2,482.2M448.9,468.6 L452.4,462.4 L456.3,465.6 L453.5,469.0M452.5,490.8 L452.1,497.1 L447.1,497.6 L440.6,498.3M460.5,454.4 L465.8,455.8M419.6,482.5 L418.3,486.7 L417.2,491.9M412.1,468.3 L410.2,471.5M458.9,479.8 L460.0,472.3M465.1,455.7 L462.3,461.9 L460.5,468.0M437.0,478.5 L434.1,484.5M444.1,448.7 L442.6,451.6 L437.9,448.7 L435.9,451.8M445.6,476.5 L440.7,474.9M419.6,477.1 L414.5,474.9 L410.2,472.8M457.9,473.1 L453.8,470.9 L450.5,468.4 L444.7,464.2M449.7,477.9 L442.6,477.1 L440.5,484.7 L443.6,485.9M463.7,459.2 L463.4,462.2 L471.0,462.2 L476.2,462.4M426.5,475.3 L424.6,479.5 L422.6,485.2 L420.7,492.7M465.0,473.1 L468.8,473.9M458.4,468.8 L452.1,467.7 L451.0,471.3 L447.2,469.8M461.6,458.3 L456.7,457.6 L455.4,461.2M465.1,462.3 L460.5,461.6 L456.1,461.2 L448.6,461.7M462.6,484.7 L458.9,482.4 L455.7,489.6 L453.6,496.4M440.5,482.0 L434.3,479.1 L427.8,475.4 L425.2,473.7M438.3,464.9 L439.4,457.1 L446.6,458.0M468.9,485.5 L464.8,483.6 L458.2,479.6 L460.1,475.6M471.6,481.2 L473.0,475.1M453.9,480.7 L448.2,479.9M420.2,472.7 L422.0,469.3 L424.5,471.1M450.2,471.5 L449.4,478.5 L449.0,482.3M437.8,487.7 L437.2,492.9M424.4,465.1 L423.0,470.5M448.2,446.1 L451.5,447.3 L450.2,452.1 L449.5,458.6M431.5,491.4 L428.9,497.3 L423.0,495.1M428.1,489.0 L422.0,486.4M421.0,481.8 L415.6,479.4 L413.1,486.4 L407.2,483.9M414.0,465.9 L412.6,471.4 L411.1,474.6 L408.2,478.9M452.9,470.4 L450.9,474.8M465.6,459.4 L467.2,456.8 L469.7,453.1M439.0,471.8 L437.6,475.2 L435.0,473.5M470.9,471.0 L472.8,466.6 L474.3,463.7M436.6,474.4 L435.5,480.5 L442.2,482.9M420.3,465.5 L422.4,462.0 L419.0,460.7 L421.5,455.6M447.9,481.6 L451.1,482.4 L452.2,476.1M443.2,456.4 L441.1,463.4 L446.4,463.9M468.5,454.0 L470.5,450.2M468.0,460.3 L470.6,453.0M456.9,450.6 L456.1,456.5M431.5,492.8 L430.0,495.4M469.7,465.1 L462.3,462.7M470.1,478.8 L473.7,472.2 L475.0,469.3M426.5,462.6 L424.5,468.5 L422.9,472.9 L419.3,471.8M462.9,451.9 L466.2,445.1M453.6,456.8 L455.5,452.1 L457.3,444.4M413.8,478.9 L412.7,483.3 L412.5,486.7 L413.0,491.9M479.2,474.2 L474.2,473.2M434.1,472.5 L437.4,473.7M465.3,482.5 L466.9,475.0 L463.2,474.2M457.1,476.4 L460.5,477.4 L465.0,479.0M420.5,480.8 L421.9,474.9M437.1,493.4 L440.4,495.2 L438.1,500.9 L436.2,507.1M421.1,465.7 L420.0,472.8 L415.5,472.9M468.3,466.6 L468.6,460.7M477.2,460.8 L476.5,465.8 L475.9,471.9M476.0,461.5 L473.0,460.1 L474.5,453.7 L474.8,445.9M456.0,457.3 L461.4,460.3 L462.5,457.3 L458.3,456.1M433.1,481.9 L439.9,485.0M452.9,447.5 L455.9,441.3M460.7,459.1 L459.8,462.6M416.2,467.5 L412.2,474.1 L409.7,480.3 L407.8,488.1M437.1,472.4 L435.9,476.3 L429.4,474.2M429.9,473.5 L428.5,480.0 L427.5,485.8M434.0,467.9 L434.3,464.5 L434.0,457.9 L434.0,452.8M453.9,462.8 L456.5,458.2M426.4,466.6 L427.6,460.4 L434.1,462.1 L442.0,462.8M452.5,478.5 L447.2,477.2M466.4,487.3 L462.8,486.5 L464.6,481.3M435.2,471.3 L431.9,477.9 L428.7,482.1M430.5,467.3 L428.0,473.8 L426.3,477.5 L419.7,475.7M434.0,466.7 L434.8,462.5M432.5,478.2 L436.3,479.2 L439.8,480.7 L446.4,483.6M454.2,493.5 L453.5,498.8M447.0,477.3 L452.9,477.6M464.5,464.0 L466.1,459.3 L460.6,457.4M439.7,452.0 L443.2,454.1M448.3,458.2 L446.1,463.2M345.9,482.3 L348.7,476.4 L345.9,474.8M346.0,470.8 L340.7,469.7 L335.9,467.9M343.1,481.2 L341.5,486.8 L336.8,485.8 L337.4,480.8M370.4,456.3 L369.5,459.8 L374.8,461.4M359.1,453.0 L351.9,450.0 L348.0,447.6 L345.5,451.2M352.0,487.9 L353.2,481.3 L355.1,476.3M343.5,453.5 L337.3,450.5M327.8,474.0 L329.6,466.6M357.1,462.8 L359.0,459.2M349.3,478.2 L348.0,482.4 L345.2,487.7 L342.9,493.4M366.9,460.0 L367.3,456.3M371.2,461.5 L367.6,459.3M349.5,457.3 L357.3,458.3 L362.4,459.7 L366.9,460.6M348.0,480.6 L348.3,475.2 L349.1,470.1 L349.4,462.8M341.8,458.4 L344.3,454.2 L346.5,451.4 L350.5,446.0M362.3,477.4 L362.7,473.2M366.5,486.4 L369.5,481.2M370.8,470.6 L369.7,473.5 L369.0,477.3 L361.4,476.7M328.1,461.0 L334.1,461.8M343.3,460.3 L347.1,462.1 L349.2,457.7M338.8,465.1 L344.0,466.4 L346.6,460.7M330.1,458.6 L336.8,461.5M358.3,452.5 L360.5,448.6M352.9,466.8 L354.6,463.0 L361.4,465.4M345.5,465.1 L350.0,465.4 L349.8,460.9 L342.9,461.5M351.6,477.9 L346.1,475.0 L342.7,479.6M346.5,487.6 L346.9,482.7 L350.9,482.8M365.5,462.4 L365.0,467.2M329.8,469.9 L336.8,471.7 L340.4,471.9 L344.2,472.2M329.1,482.9 L328.2,489.3 L328.3,497.0 L331.8,497.5M358.5,481.6 L361.4,475.0 L365.1,469.2 L368.8,464.6M365.3,478.6 L362.4,484.6 L360.5,488.8 L355.9,486.1M336.6,466.6 L335.9,471.4 L340.3,471.2M342.5,490.6 L349.8,491.4M334.8,455.6 L337.2,450.5M341.1,455.3 L334.8,452.1 L332.5,456.5 L330.0,460.7M336.5,450.4 L335.2,454.6M349.0,450.6 L341.9,449.2 L336.9,448.7 L337.7,441.9M363.4,457.3 L369.9,457.8M352.1,482.5 L359.5,484.2 L358.7,489.7 L358.9,494.2M335.7,486.5 L329.8,483.4M335.2,450.6 L338.3,445.5 L341.9,448.4M347.5,451.5 L354.7,453.7M374.9,472.2 L374.4,477.8 L374.9,485.1 L368.0,484.6M358.3,453.5 L356.2,457.6M373.2,479.0 L376.5,480.0 L381.3,481.1 L387.3,482.5M328.6,462.6 L330.6,459.4M365.3,476.0 L363.8,478.8 L360.6,483.3 L357.2,487.2M363.6,452.2 L369.2,455.5M341.6,482.1 L334.1,481.0 L328.4,480.6M338.5,456.8 L332.7,455.7 L334.4,449.6M336.5,471.6 L329.1,470.5M357.0,448.2 L355.3,454.3 L351.9,453.9 L351.4,460.0M327.2,473.5 L323.8,473.1M339.4,481.0 L336.1,480.8M367.3,452.6 L364.0,459.1M332.5,454.5 L326.9,452.9 L326.2,456.4M343.6,492.5 L339.6,492.2M362.5,476.9 L364.5,473.4 L366.5,469.9 L368.9,464.3M326.1,463.4 L321.6,462.9 L321.0,466.1M461.0,545.5 L467.9,545.5M418.1,560.3 L426.0,559.7M434.4,602.2 L439.2,603.9 L446.9,605.1 L449.3,597.5M433.6,593.6 L435.0,587.9 L435.4,582.7 L429.3,581.8M411.7,549.2 L411.9,542.0 L411.4,534.5 L412.0,529.8M442.7,535.0 L444.8,528.4 L445.2,525.4M455.4,587.9 L458.7,588.9M383.2,584.7 L388.7,585.4 L389.3,580.4 L390.4,575.3M454.2,581.0 L461.4,581.8 L466.8,582.2 L474.1,582.5M471.5,564.1 L471.0,571.3 L476.1,571.4M386.1,572.6 L387.9,565.0M441.2,585.6 L445.0,585.3 L448.2,584.9M407.4,549.4 L405.7,555.0 L404.9,560.5M386.9,560.2 L385.2,565.5 L391.6,566.7 L396.7,566.7M372.7,565.7 L375.9,566.5 L376.4,563.1M454.1,597.5 L446.4,595.8 L448.5,590.4 L449.4,587.4M477.0,569.5 L480.4,569.3 L479.4,564.2M457.7,536.9 L456.9,544.4M431.3,589.1 L431.3,593.8M471.5,586.0 L463.7,585.2 L462.6,592.9 L458.1,592.9M419.3,602.1 L424.8,602.2 L428.5,603.0M401.4,571.2 L394.9,569.7M476.2,562.0 L481.4,563.0 L480.3,568.7M465.6,545.2 L458.3,545.3M425.6,602.8 L425.1,608.6 L430.6,609.3M448.0,590.4 L444.7,589.8 L441.8,589.0 L440.8,594.1M424.5,578.6 L425.4,585.5 L427.2,593.0 L421.0,594.3M444.9,568.4 L437.8,568.0M436.1,538.4 L429.7,536.6M408.3,541.0 L401.3,541.3 L401.4,545.0M409.1,564.2 L413.4,564.6M456.6,542.1 L462.1,543.0 L461.5,550.9M470.8,544.3 L476.7,543.9 L481.5,543.2 L481.7,546.5M468.8,560.4 L461.8,559.9 L461.8,564.3 L461.5,569.9M411.4,578.4 L406.2,576.5 L398.5,574.7M428.5,539.5 L432.2,539.9M378.3,547.8 L379.9,541.9 L381.2,538.8 L382.4,534.1M474.9,577.6 L481.6,578.0M396.4,570.7 L396.2,576.9 L397.2,584.3 L397.7,589.7M434.8,594.6 L442.1,594.9 L447.6,594.5 L453.2,594.1M434.2,541.3 L433.7,536.3 L439.1,535.5M413.9,585.5 L409.5,585.8 L409.7,589.3 L404.3,589.2M427.5,545.2 L429.5,538.6 L431.1,535.3 L432.6,530.9M415.3,542.0 L415.0,535.6 L422.1,534.7M409.7,602.3 L406.0,602.4 L402.7,602.4M420.9,537.9 L427.4,539.4M453.6,572.6 L456.8,572.4M456.9,599.5 L457.6,606.5 L457.5,609.5 L452.9,608.8M456.3,588.1 L456.1,592.1 L456.8,598.7 L457.2,605.3M404.5,538.5 L404.6,544.7 L411.6,543.2M406.3,574.8 L408.1,567.2 L409.4,562.3M431.5,562.9 L430.3,566.9 L429.8,570.9M443.4,588.6 L444.7,581.5 L445.7,576.5M377.8,554.0 L376.3,559.7M420.0,557.0 L414.1,555.0 L410.9,554.3M410.7,573.0 L417.9,575.1M374.9,558.8 L373.9,562.8M460.2,564.8 L458.0,571.2 L457.5,574.4M465.6,590.5 L460.0,589.7 L456.1,589.2M406.9,569.5 L401.1,568.1M468.2,561.1 L467.7,555.5 L473.7,555.4 L473.4,559.9M442.3,546.8 L439.9,553.5 L434.0,550.5M427.0,600.5 L428.1,608.2M476.1,572.3 L483.8,571.5 L489.0,571.9M393.3,541.1 L390.3,541.3M446.4,596.4 L442.7,595.1 L445.9,589.6M383.2,542.1 L384.0,549.0 L391.2,547.7M428.3,566.3 L427.0,571.2M455.8,594.1 L448.1,593.6 L447.7,586.7 L440.9,587.6M377.3,558.4 L376.8,561.7 L374.5,569.0 L372.4,573.3M406.7,554.6 L410.2,555.0 L410.6,548.5 L405.9,548.2M428.3,584.0 L420.4,583.3 L413.4,582.8M385.9,550.5 L386.4,547.0M442.6,557.1 L448.0,557.5 L452.3,557.2M482.4,572.3 L483.2,579.5 L484.5,585.2 L484.9,588.5M401.0,573.6 L402.3,567.8 L402.7,564.5 L399.0,564.8M435.9,585.9 L437.0,578.7 L437.7,574.2 L437.6,568.8M450.0,570.4 L455.8,571.5M396.8,597.0 L400.1,596.9 L407.8,597.4M433.0,596.9 L438.2,597.6 L441.8,597.4M383.6,543.9 L383.5,538.8 L386.8,538.5 L385.7,532.0M421.0,583.7 L420.9,590.2M473.9,559.0 L476.3,551.4 L472.8,550.1M376.2,556.1 L379.3,556.3 L383.4,557.2M396.7,565.1 L404.5,565.8 L410.3,566.1M390.3,541.0 L389.6,544.5 L388.7,552.1M406.1,554.7 L402.9,554.3 L403.9,547.9 L410.3,548.5M381.7,570.8 L376.9,569.7 L376.2,577.5M463.0,572.2 L463.7,567.8M465.0,572.6 L464.3,576.3 L463.5,580.6 L458.1,579.1M415.4,558.8 L416.3,551.2 L419.4,551.8M427.0,565.5 L427.8,560.1 L433.1,560.0 L436.4,560.1M378.3,572.8 L384.2,573.6 L387.7,574.8M447.8,545.2 L451.3,545.9M427.6,582.2 L429.3,574.5 L421.9,572.3 L419.5,579.3M444.9,559.0 L451.5,560.6M439.3,536.7 L432.6,536.6 L432.4,532.0M453.2,567.6 L453.9,563.1 L455.6,558.1M437.5,544.6 L430.6,543.0 L423.4,540.0 L422.2,544.6M426.1,568.0 L423.1,567.7 L423.6,564.7M433.9,558.0 L435.4,551.1M405.5,542.1 L405.6,537.2M423.0,536.3 L430.3,536.6 L434.7,537.3M437.0,601.0 L433.8,600.3 L433.2,603.9 L432.1,607.8M438.9,531.5 L439.3,525.4 L439.1,522.2M391.3,590.9 L392.4,583.0 L397.0,583.1 L403.2,583.4M389.6,575.8 L389.5,580.2 L385.5,580.7M429.5,557.7 L422.5,555.3M429.7,534.4 L435.0,535.9 L441.0,539.0 L439.1,544.3M471.4,565.6 L470.5,569.5 L469.1,575.2M381.0,543.0 L381.2,535.6M384.7,583.7 L384.2,588.3M407.5,600.0 L403.6,599.6 L403.4,596.2 L409.7,595.4M385.9,568.3 L390.5,567.9M404.0,534.0 L403.8,537.2 L402.3,544.5 L399.9,550.8M401.1,545.4 L403.6,538.4 L408.6,539.9M439.9,562.5 L439.1,566.8M441.0,592.5 L440.6,597.0 L433.6,595.0 L434.8,589.9M377.7,569.9 L378.2,565.4 L374.3,564.8 L372.5,571.2M422.2,547.8 L421.5,555.4 L421.7,558.8M465.3,565.3 L469.2,566.4 L476.0,568.3M394.8,567.4 L400.1,567.2M408.0,560.0 L414.4,561.5 L422.0,561.8 L421.8,558.7M401.3,602.4 L394.0,601.8M479.4,569.0 L481.6,562.3 L484.6,555.6M480.3,557.6 L479.4,562.9 L478.1,568.5 L475.5,575.3M453.2,587.7 L457.5,587.6M431.2,583.1 L430.1,588.6 L423.4,587.9M417.5,605.2 L420.9,605.7 L425.2,606.6M418.1,589.1 L423.6,590.9 L429.4,593.4M442.1,589.4 L447.8,589.7 L452.7,589.5M378.7,582.2 L377.0,587.7 L372.8,585.6 L369.3,582.9M445.4,536.5 L439.1,537.1 L431.9,538.2 L424.5,540.1M380.5,576.1 L385.9,576.1 L384.9,582.7 L383.9,585.7M397.5,593.0 L396.4,585.9 L395.5,580.3M419.9,535.0 L413.5,535.3 L405.8,536.8M475.4,555.0 L481.9,555.6 L482.3,561.9M402.8,592.2 L406.3,592.1 L412.4,591.1 L411.9,587.2M401.1,536.0 L395.2,535.7M382.7,543.0 L383.8,537.9 L385.1,530.5M414.0,583.4 L419.6,583.3 L427.6,584.2M374.9,570.4 L376.7,564.7M388.2,551.9 L393.0,551.2M446.1,596.7 L447.0,593.0 L453.9,596.2M458.2,588.1 L462.6,589.4 L463.5,585.8M427.0,605.0 L425.4,611.5 L418.4,609.1M436.2,533.0 L430.3,533.1 L431.0,537.0M435.9,580.7 L428.8,581.7 L430.1,588.6 L431.6,596.2M453.0,582.3 L452.8,587.7 L451.0,595.3 L456.4,596.2M391.0,564.8 L384.7,565.4 L379.8,566.1 L379.6,571.3M473.0,586.5 L477.0,586.6 L481.1,586.5M452.7,566.1 L453.3,570.2 L449.5,570.8M389.3,567.5 L387.7,574.0 L387.5,578.8M390.2,559.4 L382.9,560.0 L378.8,560.8 L372.8,562.1M455.1,577.6 L449.3,577.3 L445.6,576.5M396.3,541.2 L395.7,534.5 L391.2,534.6 L385.6,534.9M375.9,586.7 L380.2,586.8M464.2,572.9 L465.0,578.1 L466.2,583.8M458.0,596.7 L452.7,596.1 L453.1,590.9 L452.6,585.8M424.8,565.6 L421.4,566.0 L421.1,562.7 L414.2,562.2M430.3,585.1 L423.6,584.6 L417.4,585.3M402.6,595.6 L408.9,596.4 L409.2,591.6M397.8,587.4 L394.0,586.7 L393.3,594.2 L389.5,593.8M465.4,556.1 L464.1,560.9 L463.3,568.0 L463.0,574.9M460.9,553.5 L464.0,554.3 L460.8,561.1 L464.7,563.2M379.7,548.6 L379.9,545.5M395.8,551.2 L390.8,550.4 L385.6,550.4M464.2,572.7 L471.5,574.3 L477.9,575.6M407.8,553.8 L405.1,561.3M439.3,552.1 L434.0,552.1 L430.9,551.8 L424.9,550.3M440.4,573.0 L434.4,572.4 L428.3,571.0M387.5,573.7 L388.5,568.6 L388.5,562.1 L389.0,558.9M444.8,565.9 L437.8,563.9M427.5,579.6 L426.9,573.0M417.7,545.6 L418.3,552.5M437.2,592.0 L440.8,591.7M397.0,576.5 L404.5,578.4 L407.7,579.0 L415.2,580.2M477.7,563.6 L472.4,561.7 L470.9,568.5M438.9,604.4 L434.8,604.1 L435.1,599.3 L435.0,592.9M448.6,570.4 L449.4,563.4 L450.2,559.2 L442.6,558.6M438.4,587.6 L440.7,580.0 L437.0,579.3 L435.6,585.9M464.9,564.9 L458.7,564.2M406.9,587.6 L408.2,581.9 L403.6,581.5 L403.6,584.5M413.3,542.7 L419.8,543.6 L424.9,544.7 L427.8,538.0M396.2,588.8 L395.8,594.4 L394.8,599.9 L398.7,601.3M370.7,552.4 L378.2,554.0 L382.2,555.3 L380.9,560.8M401.0,557.1 L397.1,557.1 L393.2,557.2 L392.7,550.4M401.9,575.2 L400.7,582.0M368.5,556.9 L368.3,552.9 L361.1,554.3 L354.2,555.1M482.7,566.5 L478.5,566.1 L478.2,570.5 L477.7,573.6M422.2,600.0 L422.5,596.9M454.9,559.7 L451.2,559.6M417.2,599.2 L418.4,595.5M378.6,559.3 L374.5,559.5M428.6,554.0 L427.4,560.7M413.1,562.8 L410.0,562.2 L405.7,561.5M401.4,548.5 L405.9,549.8M432.8,540.0 L439.3,539.6 L438.8,534.5 L437.4,528.4M453.5,536.8 L451.5,543.7M382.8,565.5 L389.7,565.2 L390.9,572.0M405.4,562.1 L399.0,560.8M420.1,549.4 L426.4,549.5 L427.1,546.4 L427.8,543.3M413.7,533.7 L414.4,529.3 L421.1,530.6 L427.0,530.8M384.2,579.3 L383.2,585.8M465.6,558.7 L460.6,557.7 L459.3,561.7 L457.7,567.5M403.1,566.2 L402.1,569.3 L400.9,576.0M442.4,602.8 L448.6,603.0 L449.5,598.3M423.0,604.3 L416.6,605.1 L413.0,605.8M424.2,559.2 L431.5,558.3 L437.6,558.0M457.1,562.3 L460.2,563.3M390.9,597.2 L398.5,597.1 L403.7,598.1 L401.9,602.9M394.5,555.2 L388.7,555.3M389.2,551.8 L390.6,547.6M412.1,598.2 L407.4,598.2M401.3,560.8 L395.8,559.1 L388.9,556.4M415.6,569.2 L421.0,569.8M474.3,553.8 L474.4,549.7 L474.0,545.6 L470.0,545.3M440.9,532.0 L446.7,533.4M469.7,559.3 L469.8,554.7 L476.1,555.3 L475.7,550.2M407.1,564.1 L407.0,568.5 L400.2,568.3M388.9,584.5 L390.5,578.4 L397.0,579.0 L401.4,578.7M440.6,562.8 L439.6,567.1 L438.2,573.9M459.0,593.6 L459.1,588.8M452.3,560.0 L457.3,561.4 L461.4,563.4M391.2,564.2 L390.0,568.2M387.9,585.2 L392.0,584.9 L397.9,585.2 L401.0,585.1M379.8,580.6 L374.5,581.1 L368.2,581.6M440.6,534.3 L439.0,538.8 L437.3,543.1M452.1,600.3 L452.2,606.1 L453.3,612.3M431.9,576.0 L434.9,576.6 L438.1,577.3M397.8,590.8 L398.6,587.2 L393.9,586.6M382.3,587.6 L378.9,587.4M468.1,584.5 L463.6,583.3 L458.4,581.0M408.3,553.5 L414.2,553.1M444.3,587.0 L440.1,586.3 L436.5,586.3M387.9,566.9 L380.1,566.5 L379.8,572.0M442.2,551.2 L438.4,550.0M411.8,597.5 L405.7,596.8 L405.1,602.4 L400.4,602.4M442.3,586.1 L444.4,578.8M467.5,590.6 L474.2,590.4 L479.2,590.2M446.7,559.1 L447.2,564.2 L440.4,565.1 L440.8,572.1M474.6,554.4 L481.1,556.3M419.7,591.1 L412.7,591.1 L406.6,590.4 L405.7,595.7M373.5,564.5 L378.8,566.3 L380.7,560.1 L383.7,554.0M473.7,549.5 L470.0,549.3 L469.2,552.3M397.0,540.0 L397.2,547.4 L404.7,546.8 L410.9,545.9M472.3,550.4 L471.2,557.1M396.9,583.8 L396.3,590.3 L390.3,590.4M395.1,553.3 L396.7,546.0 L397.0,542.3M467.8,566.3 L473.3,566.0 L473.3,572.9 L479.3,572.5M441.5,539.9 L440.4,547.4 L434.2,546.7M368.0,576.9 L368.2,573.3 L362.4,573.3M375.4,562.8 L375.8,557.8 L375.7,551.2 L370.4,551.6M459.9,542.4 L454.6,542.1 L448.5,541.7M472.0,547.3 L464.9,547.2 L459.2,546.3M436.9,572.6 L430.2,571.9 L426.6,572.0M429.8,589.0 L425.3,588.9M441.9,541.6 L439.4,548.9 L446.3,550.7 L452.5,551.1M439.7,532.2 L444.2,533.8 L447.5,535.5M460.9,579.0 L461.6,575.9M453.4,621.2 L448.2,620.5 L447.7,626.9M424.3,606.6 L425.0,601.2M430.6,633.2 L424.6,631.2 L426.7,627.0M419.4,620.4 L423.9,622.5M427.3,638.3 L423.9,645.4 L428.3,648.2 L424.9,652.0M449.7,633.8 L450.4,630.5 L456.6,631.0 L460.8,630.6M421.4,622.4 L420.0,628.3 L423.4,629.2M413.7,609.5 L412.9,615.0M441.2,621.9 L447.5,623.1M399.8,614.4 L392.9,610.8M402.6,634.5 L399.8,641.6M428.1,620.5 L429.8,616.6M457.8,610.4 L465.3,611.3 L465.0,618.3M397.9,633.5 L396.2,639.8 L395.6,643.6 L391.3,643.2M407.5,626.1 L411.2,626.5M399.6,618.1 L397.1,622.3 L394.9,624.8M414.4,607.3 L413.1,613.9 L420.4,615.5 L425.7,616.0M441.8,612.4 L435.3,609.2 L432.5,607.8 L430.4,612.3M442.1,607.5 L439.0,614.8 L435.5,619.8M412.7,617.9 L417.7,619.0M447.8,638.8 L449.1,634.4M447.2,613.1 L446.0,616.3 L443.8,620.2M447.3,632.3 L446.8,636.0 L450.1,636.1 L456.5,637.1M458.2,614.6 L452.6,613.8 L452.5,610.5M433.5,609.3 L430.7,614.1 L428.2,619.9 L425.7,618.3M432.2,610.8 L430.1,616.5M397.4,612.6 L400.6,614.1 L406.2,615.6 L406.8,607.8M456.7,637.7 L454.2,644.0 L451.1,642.2M448.5,634.9 L453.1,636.5M425.7,609.9 L418.6,608.0M423.2,611.0 L420.5,617.2M391.0,626.9 L387.7,624.9M416.7,643.2 L413.8,641.7 L409.9,639.1 L412.2,636.8M459.8,614.5 L462.5,608.6M424.7,640.1 L425.3,632.6 L432.1,633.3 L438.1,635.0M419.9,612.5 L422.5,613.9 L428.5,615.9 L432.4,617.9M447.3,637.8 L440.7,636.6 L439.9,640.2 L439.3,644.3M406.5,623.3 L412.8,626.1 L410.8,630.8 L416.7,634.2M440.5,620.7 L445.4,623.7 L441.5,628.3 L439.6,631.8M447.9,628.7 L446.9,631.8 L446.0,636.6M407.5,641.6 L406.9,645.2 L410.3,646.0 L417.5,648.2M461.7,625.4 L455.7,623.4 L456.8,618.3M400.3,634.6 L406.0,637.2M408.9,609.0 L402.4,605.7 L396.9,603.4 L391.5,601.0M448.4,618.6 L445.4,618.2 L445.5,622.3 L445.3,627.7M467.4,633.3 L472.3,633.6M447.6,630.0 L455.4,631.0M431.5,628.9 L426.9,628.0 L426.6,631.6M387.4,619.2 L380.5,618.7 L380.4,613.3M409.5,618.4 L407.0,623.1 L411.0,624.6M483.8,583.6 L486.0,580.4 L488.6,576.1 L491.2,571.7M505.3,568.2 L501.0,566.1 L503.3,558.7 L505.9,552.7M488.3,564.2 L484.4,570.3M496.9,546.7 L493.8,543.6M505.8,574.3 L508.3,577.1 L514.3,581.7 L520.9,585.6M489.6,582.8 L485.6,579.4M472.1,568.3 L469.5,565.7 L465.3,560.9 L459.6,555.9M499.7,550.1 L501.7,547.0M485.2,578.3 L488.6,574.5 L491.7,569.2M488.7,545.4 L493.8,549.8M502.2,545.4 L507.9,549.0 L511.8,550.8M475.6,577.3 L479.0,574.2 L482.2,569.9M508.6,530.0 L512.5,524.9M501.7,577.0 L496.7,573.6M510.7,540.5 L516.7,544.6 L513.7,547.8M502.3,582.1 L506.3,584.9 L511.2,579.8 L514.5,584.4M507.8,567.7 L503.2,572.1 L499.4,569.0 L502.6,566.2M486.9,543.4 L484.2,545.9 L479.2,551.5 L475.6,556.7M493.9,585.7 L488.9,583.8M483.4,561.1 L479.6,557.6 L482.9,554.2 L485.2,550.9M505.1,594.4 L510.7,598.3 L508.4,601.6 L506.3,606.0M479.1,549.7 L473.1,545.7M492.9,543.9 L496.3,546.6 L501.3,552.0M496.5,561.2 L491.8,565.5M488.2,576.8 L483.1,571.8 L479.3,574.7M499.8,586.5 L504.5,581.8M496.2,530.9 L492.0,528.3 L489.1,533.0 L492.7,536.3M495.1,583.6 L491.9,580.8M503.0,549.3 L501.1,553.9 L499.6,558.0 L493.2,556.1M510.7,548.6 L508.1,547.2 L505.8,550.1 L502.6,548.1M512.0,542.9 L506.2,548.0M500.0,585.0 L493.8,579.9 L491.2,583.6 L485.5,581.0M491.2,552.8 L486.6,557.1 L481.9,552.8 L477.6,556.7M489.9,599.1 L495.1,601.6M484.1,580.2 L480.6,583.4 L477.2,586.4 L471.7,581.0M471.0,543.0 L469.2,546.0M516.9,543.6 L521.8,548.8M514.9,546.0 L512.0,549.4M498.4,558.6 L500.6,553.0M501.6,581.4 L506.8,583.8 L513.8,586.3M484.1,574.2 L478.8,580.0 L476.2,582.4M475.2,546.8 L473.4,551.0M485.7,562.8 L482.8,568.0M499.4,547.4 L492.6,544.2 L489.4,542.7 L485.4,541.4M512.5,547.6 L514.6,543.0 L510.9,540.8M497.7,527.6 L503.4,531.2 L509.5,535.3M479.2,569.5 L481.9,562.5 L476.8,561.0 L469.6,558.6M486.8,561.1 L489.4,558.4M513.5,568.1 L510.2,566.7M484.5,531.8 L489.0,536.0 L494.3,531.2M489.5,587.3 L492.9,590.6M485.6,553.5 L489.2,557.4M496.0,523.2 L492.8,521.5 L489.9,526.7M470.4,537.3 L465.8,542.9M497.0,530.9 L493.4,535.5 L496.4,538.9 L500.9,534.2M512.6,548.6 L514.6,545.6 L517.1,541.5 L519.5,539.0M499.7,554.3 L503.1,550.0 L500.5,548.2M514.2,552.0 L507.3,548.9M481.2,579.8 L483.4,576.2 L487.0,578.8M515.4,539.8 L511.7,536.0M493.8,533.2 L497.2,526.3M477.0,591.9 L480.0,588.6 L484.4,582.6 L488.6,576.7M471.2,574.0 L468.6,571.3M497.2,582.6 L498.6,579.2M478.2,582.9 L481.3,586.4 L487.1,591.7 L482.9,596.0M463.0,572.6 L458.5,569.3M471.4,555.4 L468.3,559.9 L466.0,562.2M465.4,566.9 L460.7,564.9M503.4,585.2 L500.7,582.8M515.4,543.4 L509.3,540.2 L511.0,536.9M477.1,529.2 L472.7,535.0 L468.9,538.4 L463.2,543.7M480.0,587.3 L483.3,588.6M501.4,574.9 L503.9,568.7 L506.6,570.3 L511.8,572.1M517.5,557.7 L520.2,559.1 L524.4,553.6M498.6,577.8 L502.2,580.1 L504.0,577.2 L506.8,578.7M493.7,565.1 L491.4,569.3 L490.3,572.9 L487.5,580.3M496.3,538.7 L500.5,542.3 L504.6,547.1M506.5,543.3 L508.5,541.0 L511.8,536.5 L514.9,529.9M496.9,595.3 L499.3,591.9 L504.9,597.6 L501.1,603.2M472.6,564.6 L477.5,559.8 L481.3,556.2 L483.9,552.9M485.2,580.0 L482.4,577.1M490.8,537.0 L488.4,540.8 L491.7,543.0 L495.9,538.6M484.6,534.0 L478.7,531.3 L476.6,534.3 L473.8,538.7M495.9,598.3 L493.7,603.5 L499.3,606.4M474.2,527.8 L470.8,526.5 L472.6,521.6 L480.0,524.5M479.7,581.8 L477.2,586.8 L470.7,583.6M500.9,557.8 L493.8,554.4 L495.9,547.4 L498.3,542.8M486.8,525.0 L485.1,528.2 L483.4,532.2M494.5,561.8 L500.7,564.9 L498.6,568.4 L495.7,575.1M501.3,554.1 L496.2,560.1 L492.2,556.1 L489.4,554.1M505.1,539.7 L509.1,536.0 L506.4,533.1M477.4,526.8 L481.4,528.4 L489.1,530.0M497.1,580.6 L495.7,584.3M491.3,592.5 L487.0,588.9 L483.5,585.9M492.6,591.6 L485.7,588.5 L488.3,582.8M497.7,556.3 L500.7,550.4 L505.1,552.4 L506.7,549.4M483.0,561.0 L477.4,556.0 L482.5,550.1M491.4,544.7 L486.1,542.1 L482.5,541.1 L476.8,540.3M502.0,559.4 L505.8,563.4 L511.4,559.6M517.5,575.7 L520.6,578.2 L525.1,581.0 L528.5,576.2M514.8,553.9 L517.6,551.5M499.1,546.9 L495.9,545.7 L494.6,551.2M467.0,574.4 L463.0,580.9 L461.7,583.9 L458.8,588.4M488.2,527.4 L484.7,525.8 L479.8,523.8M486.3,552.3 L483.8,555.9 L490.9,559.7 L493.5,555.8M512.2,533.5 L514.9,535.8M498.5,565.3 L504.4,568.7 L501.6,572.7M492.1,543.4 L488.1,547.5 L483.6,543.8 L477.5,540.0M468.1,583.3 L472.2,585.9M493.7,535.8 L488.3,533.4 L484.7,531.0M472.2,531.7 L475.5,534.0 L472.9,537.6 L478.4,540.1M509.6,563.2 L507.2,565.5M492.3,530.4 L489.7,534.2 L493.3,537.9 L498.1,541.4M510.6,575.5 L506.6,573.8 L508.1,570.3 L503.6,568.9M476.4,577.5 L471.6,573.4M464.0,559.4 L459.8,563.3M491.9,536.2 L487.0,532.5 L481.8,537.3 L478.6,540.1M466.1,575.4 L469.3,576.6M512.7,578.5 L510.6,581.7 L515.6,586.1 L519.4,590.3M513.2,559.3 L510.5,557.4 L506.5,553.5 L503.3,549.6M223.3,578.2 L219.2,577.9 L215.8,578.0 L210.3,579.2M233.0,558.5 L239.2,560.8 L242.9,561.4 L246.1,562.3M266.4,569.9 L263.1,569.5 L257.6,568.4 L257.4,571.5M212.6,574.0 L213.7,569.6M242.0,587.0 L243.7,582.4 L245.8,577.6M253.6,565.9 L256.9,566.3 L255.6,572.1 L252.3,571.9M224.9,564.8 L221.3,571.5 L220.0,574.8 L219.1,579.8M266.7,550.1 L273.6,552.6 L275.7,545.8M242.6,570.5 L241.2,574.0 L239.9,578.4M228.6,583.2 L232.2,585.1 L234.0,582.5 L237.0,578.4M228.1,557.0 L228.8,553.8 L229.0,548.8M225.4,554.8 L223.6,561.1 L219.8,559.4M246.8,551.0 L241.6,549.3 L237.5,548.6M207.1,567.1 L208.6,563.4 L210.5,556.0M255.3,546.7 L260.5,548.1M219.0,554.5 L219.4,550.4 L219.5,544.9 L214.7,545.6M258.3,543.8 L256.1,549.4 L254.1,553.9M272.8,571.0 L265.8,569.7 L260.4,568.4 L257.4,567.4M218.9,554.4 L225.2,556.2M252.8,550.9 L251.3,556.0M251.1,588.3 L249.1,594.0 L247.4,597.4M261.0,578.4 L261.9,575.5M259.6,567.4 L258.1,574.5M248.6,566.9 L247.1,574.2 L242.9,573.0M239.2,557.7 L242.2,551.8 L243.5,548.4M240.3,561.0 L244.1,562.9 L247.7,557.9 L250.0,554.9M225.6,561.3 L219.9,558.9 L213.0,556.3M211.0,572.9 L206.8,571.4M260.2,564.4 L263.0,557.6 L258.8,555.5M208.4,570.7 L207.8,574.1 L211.2,574.5 L215.1,575.6M243.1,576.9 L239.5,575.6M212.7,580.2 L218.8,581.5 L217.1,587.4M223.1,577.3 L219.5,583.6M260.8,559.6 L264.6,560.0M214.9,581.4 L220.2,584.1M249.3,542.4 L255.1,543.2 L259.7,543.5 L264.9,544.4M226.2,572.0 L231.5,574.0 L236.2,576.8 L240.4,578.4M215.1,552.9 L219.3,553.2 L223.9,552.7M268.7,578.5 L274.4,578.9 L281.5,578.5M226.1,546.9 L221.4,545.6 L217.2,544.4M242.8,556.8 L244.3,553.2 L249.2,556.0 L254.5,559.7M228.0,567.3 L224.6,566.5 L219.7,564.5 L216.3,562.5M259.6,575.5 L264.8,576.6 L266.4,571.9M217.9,553.8 L212.7,552.7M247.9,559.1 L252.4,559.7 L259.3,561.4 L260.6,557.3M246.9,568.8 L242.8,568.2 L242.2,573.5 L242.5,579.2M253.4,547.9 L257.1,549.7 L261.3,552.9M209.2,561.7 L210.5,556.5M242.3,574.6 L240.1,580.7M265.0,563.8 L265.6,555.9M225.1,553.8 L219.1,550.8 L222.6,545.4M257.8,581.6 L254.0,588.3 L250.3,586.9 L251.9,584.0M244.4,572.2 L245.3,564.3 L241.6,564.6M255.2,565.0 L247.7,563.1M242.9,545.3 L240.0,544.7M234.3,551.7 L235.8,547.6 L239.3,541.4M218.4,578.4 L218.7,572.4 L219.8,567.7M246.8,583.8 L247.9,576.8 L251.9,577.9M211.7,556.3 L209.2,561.8M233.6,551.3 L226.2,549.2 L221.4,548.1 L215.6,546.6M217.5,575.0 L223.0,578.1M231.6,580.9 L229.9,585.4 L224.5,584.2M234.9,568.7 L235.3,564.5 L235.1,558.9 L235.2,552.3M257.7,561.3 L256.6,568.8 L249.4,568.6 L249.5,562.0M219.0,551.6 L215.4,550.8 L214.6,554.1M223.0,557.0 L224.7,551.6 L232.1,553.4M248.2,573.7 L254.3,575.0 L253.4,579.7 L253.3,586.3M238.7,549.1 L234.7,548.5 L234.2,551.8 L240.9,553.0M229.0,551.7 L236.0,555.3M216.9,558.9 L215.8,561.9 L222.3,564.1M243.7,546.0 L240.4,552.2M249.6,586.3 L244.2,584.2 L239.3,582.7M247.1,560.6 L251.0,561.9 L252.5,558.0M238.8,568.4 L232.5,567.0 L233.1,563.8 L240.5,564.8M225.3,583.7 L222.3,583.4 L217.9,582.7 L218.1,590.4M227.0,549.0 L231.1,550.5 L232.3,545.7 L238.0,546.9M246.0,578.3 L242.3,577.3 L235.4,576.0M234.0,550.3 L226.5,549.1M239.1,581.4 L238.2,584.7M265.4,564.7 L261.5,562.4 L257.3,560.0M261.6,566.4 L264.7,566.7 L271.4,567.0M239.3,563.4 L245.0,564.1 L250.8,564.4M220.8,562.8 L220.6,566.4 L220.3,570.2 L220.3,575.8M266.7,550.0 L264.4,554.3 L262.9,557.6M260.9,583.9 L265.3,584.6M233.9,549.6 L234.3,542.4M232.8,578.4 L231.2,584.8 L228.8,590.0 L234.2,593.1M273.9,558.8 L273.4,563.9 L270.0,564.1M243.8,550.0 L246.2,543.6 L247.5,540.0 L243.5,539.4M210.4,567.1 L208.9,570.6M349.0,621.8 L355.0,622.2 L358.4,622.3 L365.8,622.7M340.7,593.9 L339.5,588.8 L335.2,590.3M328.1,583.6 L323.3,582.5M369.8,605.1 L377.3,603.4 L381.5,603.3 L384.7,602.6M346.4,613.5 L346.3,609.5 L346.7,605.1 L346.8,600.1M373.5,591.8 L379.5,591.4 L386.0,590.8M344.0,581.8 L338.7,580.8M372.4,613.5 L365.3,613.8M353.6,582.7 L353.5,576.4 L358.4,576.6 L357.6,569.0M335.9,613.4 L337.5,620.7 L338.8,624.2 L339.6,628.7M369.5,588.6 L368.4,582.2M309.9,580.4 L309.4,576.9M359.0,585.1 L365.7,583.5 L368.6,582.5M362.5,585.9 L369.6,586.3M312.1,608.6 L312.3,601.8 L318.8,602.2 L322.7,602.5M357.8,598.5 L357.2,591.6 L357.9,584.4M315.7,608.7 L315.0,605.3 L311.8,606.4 L313.1,609.9M370.2,591.5 L366.9,591.9 L362.1,592.9M311.8,605.9 L311.7,601.5M329.1,612.0 L329.5,607.6 L331.1,602.7M348.9,624.0 L353.6,624.0M313.1,594.7 L314.6,602.2 L319.1,601.6 L326.4,599.5M362.6,576.1 L357.5,576.2M309.2,598.2 L304.2,597.9 L297.0,596.3M336.5,615.5 L336.5,612.1 L336.2,606.8M349.0,607.1 L349.8,603.8M355.3,605.5 L355.3,601.5 L350.5,601.7 L343.7,603.1M347.4,590.9 L344.2,591.3M345.4,605.4 L339.9,605.8 L338.9,598.5M336.2,582.9 L336.0,579.4 L335.9,573.9 L340.0,573.0M365.1,606.9 L362.1,607.5 L361.7,603.4M341.3,624.5 L337.9,624.6 L330.4,623.2M341.2,594.4 L337.9,594.5 L331.8,594.2 L330.9,598.4M317.5,607.4 L317.2,601.6 L317.7,597.0M376.2,599.6 L380.5,599.3M347.2,581.3 L348.3,573.7 L349.3,570.6 L353.9,571.4M322.5,608.3 L315.5,608.4M339.8,615.8 L333.4,614.4M321.4,612.7 L322.1,607.8M338.8,599.2 L331.9,600.9 L333.4,605.9 L334.6,610.9M375.6,605.3 L381.4,605.9 L381.9,599.4 L374.8,598.9M353.0,572.8 L345.5,573.0 L346.0,566.4M369.0,606.7 L363.5,607.0M353.9,616.6 L357.0,615.9 L360.9,615.5 L365.8,614.2M369.0,584.6 L376.3,585.7M326.3,627.3 L320.5,627.2 L320.3,620.2M372.7,587.3 L379.4,586.3 L377.4,580.7 L373.7,582.0M345.7,581.6 L345.4,584.9M336.9,629.9 L336.2,624.3 L334.5,617.9M363.3,609.3 L363.0,613.4 L370.3,613.0M348.4,627.1 L347.4,623.0M313.2,599.4 L319.1,600.6 L319.1,596.2M357.4,615.2 L360.7,614.7 L366.8,613.5M321.1,586.3 L316.6,585.9 L311.8,584.5 L310.2,587.6M325.8,606.0 L333.1,605.6 L339.8,605.4 L339.7,601.5M340.1,610.5 L339.0,605.5 L338.1,600.2M316.9,593.3 L317.6,588.6M363.3,596.5 L359.6,596.4 L355.5,596.8 L353.5,589.7M301.7,593.8 L300.4,600.3M373.0,611.7 L377.8,611.9M361.1,599.6 L361.8,606.6M320.3,590.5 L312.6,591.3M361.6,593.5 L368.1,593.6 L368.4,590.3M329.2,606.1 L329.6,602.8M324.2,600.3 L327.6,600.9 L330.8,601.5M315.6,578.9 L309.0,577.5M323.3,625.9 L317.2,627.1M346.3,627.4 L341.8,628.3 L334.5,629.5 L329.1,631.2M331.2,621.2 L330.2,628.2M340.7,585.0 L338.9,577.5 L333.0,580.2 L329.8,582.1M361.0,597.1 L356.6,596.9 L357.2,592.9 L359.3,586.4M336.4,593.7 L328.8,594.9 L323.5,594.9M343.3,618.5 L337.2,618.2 L337.3,625.0 L333.7,624.8M342.7,625.0 L342.9,629.6 L342.9,635.4M302.8,608.0 L309.3,606.7M341.0,594.4 L342.2,601.2M319.7,605.9 L320.3,612.7 L313.5,613.1 L312.0,605.6M363.9,601.2 L367.5,602.0M362.2,595.5 L362.4,590.2 L363.0,586.3M343.4,612.7 L347.7,612.6M358.2,587.8 L351.7,587.8 L350.9,581.7 L349.6,576.0M330.3,596.5 L330.6,604.3 L331.3,611.1M338.9,605.5 L333.1,606.7M326.6,581.2 L329.7,581.1M357.6,605.3 L357.5,609.5 L356.9,615.2 L353.9,614.9M313.9,607.6 L313.4,603.8 L320.7,602.5M359.7,574.0 L358.4,568.3 L358.0,563.4M343.3,593.9 L346.5,593.5M345.7,605.7 L351.8,605.4 L357.4,604.5 L364.1,604.1M342.5,610.5 L341.4,602.6M323.4,602.0 L319.8,602.5 L312.7,604.9 L306.0,608.3M374.5,607.5 L373.1,601.4M323.6,616.0 L323.9,610.5M304.2,596.7 L304.8,602.1 L300.9,601.9M316.3,611.7 L312.4,611.6M340.2,612.1 L340.2,616.9 L335.8,616.7M332.1,581.0 L326.3,579.6M351.3,597.3 L350.3,602.9 L350.2,607.8 L350.7,610.9M309.4,595.9 L309.0,588.8 L308.2,581.0M371.5,618.5 L367.2,618.2 L359.3,618.6 L355.9,618.6M305.6,607.7 L307.1,600.8 L307.8,594.5M339.3,585.6 L338.9,578.2M357.0,620.1 L355.4,626.8 L354.5,632.3 L362.1,632.8M374.7,586.7 L375.0,594.7 L370.3,595.1M359.3,600.1 L352.6,599.8 L353.9,592.2 L361.5,593.0M328.2,590.6 L327.6,583.2M307.6,611.7 L312.0,611.1 L318.4,610.0M354.5,613.7 L355.2,621.1 L361.8,621.1M316.7,597.5 L316.3,602.9M317.4,619.0 L311.2,619.0 L303.4,618.2 L302.5,625.1M336.5,572.7 L333.2,572.7 L332.4,578.5 L330.4,585.6M360.9,594.5 L355.8,594.5 L355.3,591.4 L353.4,585.7M361.7,605.2 L362.5,611.3 L368.3,611.7M357.9,619.2 L357.7,623.4 L356.7,628.2M318.0,620.4 L313.5,619.8 L311.4,627.5 L307.4,626.6M333.9,571.9 L335.0,578.7 L337.0,585.4 L337.8,590.1M358.7,584.2 L358.1,577.4 L353.6,577.8M372.7,593.0 L372.6,587.0 L368.3,586.3 L367.2,592.6M324.5,589.8 L328.1,590.4M362.0,586.4 L362.6,579.0 L366.1,578.8M396.4,676.3 L390.0,673.4 L388.2,681.0 L391.5,681.6M401.6,640.0 L404.0,642.2M405.7,637.8 L402.2,641.6 L399.3,645.5M399.1,653.8 L401.0,650.3M399.2,675.1 L402.1,669.8 L404.0,667.5M396.6,661.9 L391.7,658.2 L396.2,652.2M413.4,645.3 L418.3,648.9 L424.6,653.5 L421.7,659.2M405.7,637.6 L406.8,634.8 L408.3,631.4M403.6,675.3 L408.3,677.1 L409.9,673.2 L410.9,669.1M411.3,680.6 L418.2,683.5 L416.0,690.2M400.3,646.0 L395.5,641.9 L392.7,639.8M400.7,666.9 L398.5,672.0 L396.3,676.1 L393.0,675.0M395.0,654.2 L398.0,655.9M398.2,666.3 L393.9,671.0 L390.9,668.5 L387.2,673.8M402.1,660.7 L398.9,657.8M528.1,452.3 L527.1,457.0 L526.3,460.3M519.6,474.0 L521.5,469.1 L525.5,470.3M496.3,459.4 L499.7,453.6 L496.4,452.5M501.9,472.7 L497.9,471.2 L491.4,469.0 L489.8,473.3M506.5,445.7 L512.3,449.0M514.9,467.5 L511.6,465.5 L508.4,463.5 L506.1,461.5M502.0,436.4 L498.7,441.3 L494.8,447.5M496.5,462.9 L503.2,466.7M497.0,464.4 L493.3,463.2 L488.4,461.3M510.8,473.9 L507.8,478.6M511.7,446.9 L513.6,444.2 L509.0,440.6M521.8,446.6 L518.4,445.9 L514.1,444.4M507.6,471.6 L508.8,468.7M516.0,471.9 L509.9,468.4 L507.6,472.3M520.9,447.9 L524.4,449.8 L527.0,443.9M509.0,439.4 L510.6,433.1M514.1,451.4 L506.9,448.1 L503.5,447.3M513.4,436.7 L510.6,442.3 L505.7,440.9M501.9,462.1 L494.8,459.8M497.4,447.4 L498.8,442.6 L492.5,442.0 L486.8,440.6M506.8,464.3 L504.3,469.9 L501.1,475.7 L499.2,478.8M529.5,452.4 L527.3,455.5 L524.4,453.6 L521.0,451.7M496.8,467.5 L495.5,473.7 L492.1,472.5 L487.6,471.8M521.4,460.3 L528.3,462.8 L531.8,463.6M510.2,465.6 L513.7,460.3 L518.3,455.2 L520.9,457.6M509.3,433.6 L514.9,435.4 L515.4,432.0M505.9,442.3 L501.0,439.2M498.5,471.5 L502.3,474.2M497.6,453.2 L494.1,451.8 L490.4,449.5 L486.6,446.0M509.7,435.2 L507.5,438.1M490.8,453.4 L485.7,451.2 L479.1,448.5M495.5,463.1 L497.2,460.3M516.5,468.9 L511.8,475.2 L515.2,477.2M529.0,452.0 L528.1,455.7M507.6,469.3 L502.9,465.9 L500.1,464.2 L503.3,460.5M494.7,459.4 L497.8,454.2 L503.0,456.9M515.7,472.8 L510.4,469.2M520.6,440.4 L517.9,439.0 L519.1,435.8M506.8,454.2 L511.6,457.3 L508.5,464.4 L515.2,468.2M497.9,454.5 L494.8,452.7 L491.4,457.2 L495.7,459.8M495.9,451.9 L501.2,455.3M496.3,450.9 L501.1,454.5M517.3,451.3 L521.3,452.6 L527.5,455.1M523.1,448.6 L520.0,453.8M513.7,472.0 L516.6,465.9M500.9,456.2 L496.8,455.6 L496.9,451.8 L497.8,446.1M494.2,445.4 L489.1,443.7 L487.0,450.8 L481.2,449.2M519.8,472.8 L515.0,470.6M514.8,431.8 L517.1,426.1 L522.9,429.1M523.5,458.6 L530.1,462.1 L531.9,458.0 L527.8,455.2M520.3,443.2 L519.1,450.2 L516.9,456.6 L515.6,462.6M508.8,464.1 L510.1,458.1M494.8,443.8 L487.2,442.1 L483.8,441.0 L478.6,439.4M521.1,448.3 L525.4,450.1M502.6,468.7 L499.2,466.1M510.3,456.9 L508.4,459.9 L514.0,462.8M501.9,457.6 L495.5,455.1 L489.9,453.2 L487.7,458.5M519.3,444.3 L514.9,443.6 L513.9,447.7M514.9,459.7 L519.7,461.0M498.1,441.0 L495.0,438.6" fill="none" stroke="#d9cfb7" stroke-width="0.7"/>
<clipPath id="c5"><path d="M330.0,455.0 L342.0,455.0 L342.0,472.0 L330.0,472.0Z"/></clipPath>
<path clip-path="url(#c5)" d="M341.7,469.1 L348.0,471.2 L353.4,474.6 L358.9,480.4M336.7,456.2 L340.0,453.4 L342.7,450.2 L343.0,442.3M334.0,464.7 L331.6,456.7 L326.8,454.8 L320.0,451.9M341.8,466.1 L335.0,464.2 L330.4,466.5 L326.1,466.2M338.9,467.8 L335.5,466.2 L327.2,469.0 L322.0,476.0M337.2,466.0 L341.6,458.8 L349.7,460.3 L352.0,462.9M340.9,469.2 L348.3,471.7 L354.9,475.5 L358.2,474.1M335.3,455.6 L338.7,456.8 L342.7,452.9 L339.6,444.6M341.2,456.1 L338.1,459.6 L331.4,461.6 L324.6,460.5M336.2,464.5 L339.1,467.0 L343.0,466.6 L350.1,470.7" fill="none" stroke="#c9bc9a" stroke-width="1.2"/>
<path d="M324,455 L338,452 L342,470 L328,472Z" fill="#d8ceb0"/>
<path d="M411,493 L422,493 L422,502 L411,502Z" fill="#d6d6d2"/><path d="M353,485 L360,485 L360,492 L353,492Z" fill="#cfdbd8"/>
<path d="M302,426 C320,430 340,438 355,447 S385,455 400,458" fill="none" stroke="#a9c1d8" stroke-width="0.8"/>
<path d="M66.6,661.8 C72.2,661.3 87.7,660.0 100.0,659.0 C112.3,658.0 130.7,656.8 140.7,655.6 C150.7,654.4 154.8,652.9 160.0,652.0 C165.2,651.1 166.6,650.9 171.6,650.5 C176.6,650.1 185.3,649.3 190.0,649.4 C194.7,649.5 195.8,651.1 200.0,651.0 C204.2,650.9 210.5,649.3 215.0,649.0 C219.5,648.7 222.8,648.9 227.0,649.4 C231.2,649.9 234.5,652.2 240.0,652.0 C245.5,651.8 253.5,649.3 260.0,648.0 C266.5,646.7 272.3,645.3 279.0,644.0 C285.7,642.7 293.5,640.3 300.0,640.0 C306.5,639.7 313.0,641.2 318.0,642.0 C323.0,642.8 325.5,643.3 330.0,645.0 C334.5,646.7 340.0,649.8 345.0,652.0 C350.0,654.2 354.5,656.0 360.0,658.0 C365.5,660.0 375.0,663.0 378.0,664.0" fill="none" stroke="#8aaed0" stroke-width="1.1"/>
<path d="M475.4,513.0 C476.5,515.8 479.6,524.3 482.0,530.0 C484.4,535.7 487.0,541.2 490.0,547.0 C493.0,552.8 495.8,557.7 500.0,565.0 C504.2,572.3 511.6,584.3 515.3,591.0 C519.0,597.7 518.9,600.1 522.0,605.0 C525.1,609.9 529.8,616.7 534.0,620.4 C538.2,624.1 544.5,623.0 547.0,627.0 C549.5,631.0 546.5,641.9 549.0,644.5 C551.5,647.1 557.4,640.1 561.9,642.6 C566.4,645.1 571.3,655.0 575.8,659.3 C580.3,663.6 586.3,664.9 588.8,668.6 C591.3,672.3 590.6,677.3 590.6,681.6 C590.6,685.9 592.8,691.0 588.8,694.5 C584.8,698.0 570.2,701.0 566.5,702.3" fill="none" stroke="#8aaed0" stroke-width="1.1"/>
<path d="M224.0,600.0 C223.7,603.3 222.8,613.3 222.0,620.0 C221.2,626.7 219.0,634.2 219.0,640.0 C219.0,645.8 220.2,650.0 222.0,655.0 C223.8,660.0 227.8,664.2 230.0,670.0 C232.2,675.8 233.7,684.2 235.0,690.0 C236.3,695.8 237.5,702.5 238.0,705.0" fill="none" stroke="#8aaed0" stroke-width="1.1"/>
<path d="M489,547 C497,563 507,580 517,595" fill="none" stroke="#8aaed0" stroke-width="2.2"/>
<path d="M480.0,506.0 C483.3,508.3 490.0,515.2 500.0,520.0 C510.0,524.8 523.3,531.7 540.0,535.0 C556.7,538.3 586.3,539.2 600.0,540.0 C613.7,540.8 618.3,540.0 622.0,540.0" fill="none" stroke="#ddd3bd" stroke-width="0.8"/>
<path d="M520.0,545.0 C526.7,546.7 546.7,551.7 560.0,555.0 C573.3,558.3 589.7,562.8 600.0,565.0 C610.3,567.2 618.3,567.5 622.0,568.0" fill="none" stroke="#ddd3bd" stroke-width="0.8"/>
<path d="M460.0,560.0 C466.7,563.3 488.3,573.3 500.0,580.0 C511.7,586.7 522.5,595.0 530.0,600.0 C537.5,605.0 542.5,608.3 545.0,610.0" fill="none" stroke="#ddd3bd" stroke-width="0.8"/>
<path d="M585.0,520.0 C585.8,526.7 588.3,546.7 590.0,560.0 C591.7,573.3 593.3,586.7 595.0,600.0 C596.7,613.3 599.2,633.3 600.0,640.0" fill="none" stroke="#ddd3bd" stroke-width="0.8"/>
<path d="M560.0,470.0 C558.3,475.0 552.5,490.0 550.0,500.0 C547.5,510.0 545.8,525.0 545.0,530.0" fill="none" stroke="#ddd3bd" stroke-width="0.8"/>
<path d="M620.0,600.0 C617.5,603.3 608.3,613.3 605.0,620.0 C601.7,626.7 600.8,636.7 600.0,640.0" fill="none" stroke="#ddd3bd" stroke-width="0.8"/>
<path d="M394.3,380.0 C392.2,383.8 386.0,395.3 382.0,403.0 C378.0,410.7 373.7,419.2 370.4,426.0 C367.1,432.8 364.8,438.3 362.0,444.0 C359.2,449.7 355.9,453.5 353.4,460.0 C350.9,466.5 349.4,476.0 346.8,483.0 C344.2,490.0 340.8,496.2 338.0,502.0 C335.2,507.8 331.3,515.3 330.0,518.0" fill="none" stroke="#e9c65a" stroke-width="2.7"/>
<path d="M436.4,407.8 C437.7,405.1 439.4,394.4 444.0,391.4 C448.6,388.3 457.5,389.7 464.0,389.5 C470.5,389.3 478.4,390.3 483.0,390.2 C487.6,390.1 488.9,390.5 491.9,389.0 C494.8,387.5 492.7,382.7 500.7,381.3 C508.7,379.9 531.9,380.9 539.8,380.7 C547.7,380.5 546.6,380.1 548.0,380.0" fill="none" stroke="#e9c65a" stroke-width="2.7"/>
<path d="M484.3,391.4 C484.1,394.1 481.7,401.3 483.0,407.8 C484.3,414.3 490.6,425.0 491.9,430.5 C493.2,436.0 491.7,437.2 490.6,440.6 C489.6,444.0 488.2,446.6 485.6,450.7 C483.0,454.8 478.4,460.4 475.0,465.0 C471.6,469.6 466.7,475.8 465.0,478.0" fill="none" stroke="#e9c65a" stroke-width="2.7"/>
<path d="M441.4,429.3 C446.2,431.8 463.0,440.8 470.4,444.4 C477.8,448.0 481.0,448.4 485.6,450.7 C490.2,453.0 496.1,457.0 498.2,458.3" fill="none" stroke="#e9c65a" stroke-width="2.7"/>
<path d="M470.4,444.4 C469.3,447.0 466.1,455.1 464.0,460.0 C461.9,464.9 459.0,471.7 458.0,474.0" fill="none" stroke="#e9c65a" stroke-width="2.7"/>
<path d="M383.6,420.3 C385.5,421.1 390.3,422.6 395.0,425.0 C399.7,427.4 409.2,433.3 412.0,435.0" fill="none" stroke="#e9c65a" stroke-width="2.7"/>
<path d="M383.6,420.3 C382.3,422.4 378.3,428.9 376.0,433.0 C373.7,437.1 371.0,443.0 370.0,445.0" fill="none" stroke="#e9c65a" stroke-width="2.7"/>
<path d="M363.4,444.4 C366.7,444.8 376.3,445.8 383.0,447.0 C389.7,448.2 400.2,450.9 403.7,451.7" fill="none" stroke="#e9c65a" stroke-width="2.7"/>
<path d="M557.3,370.7 C559.4,371.2 566.2,372.3 570.0,374.0 C573.8,375.7 576.7,379.0 580.0,381.0 C583.3,383.0 588.3,385.2 590.0,386.0" fill="none" stroke="#e9c65a" stroke-width="2.7"/>
<path d="M490.0,490.0 C498.0,488.3 522.9,480.9 537.9,479.6 C552.9,478.3 566.0,480.8 580.0,482.0 C594.0,483.2 615.0,486.2 622.0,487.0" fill="none" stroke="#e9c65a" stroke-width="2.7"/>
<path d="M388.9,502.8 C391.0,504.6 396.1,512.6 401.4,513.3 C406.6,514.0 414.1,508.8 420.4,507.0 C426.7,505.2 435.0,501.2 439.3,502.8 C443.6,504.4 442.8,512.3 446.0,516.5 C449.2,520.7 455.1,524.0 458.6,528.0 C462.1,532.0 464.6,535.7 467.0,540.6 C469.4,545.5 474.0,552.2 473.3,557.4 C472.6,562.6 466.3,567.5 462.8,572.0 C459.3,576.5 455.1,582.2 452.3,584.7 C449.5,587.2 447.1,586.6 446.0,587.0" fill="none" stroke="#e9c65a" stroke-width="2.7"/>
<path d="M400.6,540.0 C400.6,541.9 403.4,547.9 400.6,551.2 C397.8,554.5 389.4,557.2 384.0,560.0 C378.6,562.8 370.1,564.1 368.4,568.0 C366.7,571.9 373.1,580.8 374.0,583.4" fill="none" stroke="#e9c65a" stroke-width="2.7"/>
<path d="M428.6,561.0 L430.0,565.2" fill="none" stroke="#e9c65a" stroke-width="2.7"/>
<path d="M448.2,584.8 L458.0,573.6" fill="none" stroke="#e9c65a" stroke-width="2.7"/>
<path d="M354.8,462.6 C358.2,463.2 368.2,464.4 375.0,466.0 C381.8,467.6 392.2,471.0 395.6,472.0" fill="none" stroke="#e9c65a" stroke-width="2.7"/>
<path d="M394.3,380.0 C392.2,383.8 386.0,395.3 382.0,403.0 C378.0,410.7 373.7,419.2 370.4,426.0 C367.1,432.8 364.8,438.3 362.0,444.0 C359.2,449.7 355.9,453.5 353.4,460.0 C350.9,466.5 349.4,476.0 346.8,483.0 C344.2,490.0 340.8,496.2 338.0,502.0 C335.2,507.8 331.3,515.3 330.0,518.0" fill="none" stroke="#fde987" stroke-width="1.7"/>
<path d="M436.4,407.8 C437.7,405.1 439.4,394.4 444.0,391.4 C448.6,388.3 457.5,389.7 464.0,389.5 C470.5,389.3 478.4,390.3 483.0,390.2 C487.6,390.1 488.9,390.5 491.9,389.0 C494.8,387.5 492.7,382.7 500.7,381.3 C508.7,379.9 531.9,380.9 539.8,380.7 C547.7,380.5 546.6,380.1 548.0,380.0" fill="none" stroke="#fde987" stroke-width="1.7"/>
<path d="M484.3,391.4 C484.1,394.1 481.7,401.3 483.0,407.8 C484.3,414.3 490.6,425.0 491.9,430.5 C493.2,436.0 491.7,437.2 490.6,440.6 C489.6,444.0 488.2,446.6 485.6,450.7 C483.0,454.8 478.4,460.4 475.0,465.0 C471.6,469.6 466.7,475.8 465.0,478.0" fill="none" stroke="#fde987" stroke-width="1.7"/>
<path d="M441.4,429.3 C446.2,431.8 463.0,440.8 470.4,444.4 C477.8,448.0 481.0,448.4 485.6,450.7 C490.2,453.0 496.1,457.0 498.2,458.3" fill="none" stroke="#fde987" stroke-width="1.7"/>
<path d="M470.4,444.4 C469.3,447.0 466.1,455.1 464.0,460.0 C461.9,464.9 459.0,471.7 458.0,474.0" fill="none" stroke="#fde987" stroke-width="1.7"/>
<path d="M383.6,420.3 C385.5,421.1 390.3,422.6 395.0,425.0 C399.7,427.4 409.2,433.3 412.0,435.0" fill="none" stroke="#fde987" stroke-width="1.7"/>
<path d="M383.6,420.3 C382.3,422.4 378.3,428.9 376.0,433.0 C373.7,437.1 371.0,443.0 370.0,445.0" fill="none" stroke="#fde987" stroke-width="1.7"/>
<path d="M363.4,444.4 C366.7,444.8 376.3,445.8 383.0,447.0 C389.7,448.2 400.2,450.9 403.7,451.7" fill="none" stroke="#fde987" stroke-width="1.7"/>
<path d="M557.3,370.7 C559.4,371.2 566.2,372.3 570.0,374.0 C573.8,375.7 576.7,379.0 580.0,381.0 C583.3,383.0 588.3,385.2 590.0,386.0" fill="none" stroke="#fde987" stroke-width="1.7"/>
<path d="M490.0,490.0 C498.0,488.3 522.9,480.9 537.9,479.6 C552.9,478.3 566.0,480.8 580.0,482.0 C594.0,483.2 615.0,486.2 622.0,487.0" fill="none" stroke="#fde987" stroke-width="1.7"/>
<path d="M388.9,502.8 C391.0,504.6 396.1,512.6 401.4,513.3 C406.6,514.0 414.1,508.8 420.4,507.0 C426.7,505.2 435.0,501.2 439.3,502.8 C443.6,504.4 442.8,512.3 446.0,516.5 C449.2,520.7 455.1,524.0 458.6,528.0 C462.1,532.0 464.6,535.7 467.0,540.6 C469.4,545.5 474.0,552.2 473.3,557.4 C472.6,562.6 466.3,567.5 462.8,572.0 C459.3,576.5 455.1,582.2 452.3,584.7 C449.5,587.2 447.1,586.6 446.0,587.0" fill="none" stroke="#fde987" stroke-width="1.7"/>
<path d="M400.6,540.0 C400.6,541.9 403.4,547.9 400.6,551.2 C397.8,554.5 389.4,557.2 384.0,560.0 C378.6,562.8 370.1,564.1 368.4,568.0 C366.7,571.9 373.1,580.8 374.0,583.4" fill="none" stroke="#fde987" stroke-width="1.7"/>
<path d="M428.6,561.0 L430.0,565.2" fill="none" stroke="#fde987" stroke-width="1.7"/>
<path d="M448.2,584.8 L458.0,573.6" fill="none" stroke="#fde987" stroke-width="1.7"/>
<path d="M354.8,462.6 C358.2,463.2 368.2,464.4 375.0,466.0 C381.8,467.6 392.2,471.0 395.6,472.0" fill="none" stroke="#fde987" stroke-width="1.7"/>
<path d="M334.0,335.0 C334.4,335.4 333.6,336.6 336.3,337.3 C339.0,338.0 346.2,337.4 350.2,339.2 C354.2,341.0 357.6,345.8 360.3,348.0 C363.0,350.2 363.8,350.7 366.6,352.4 C369.4,354.1 373.4,355.8 377.0,358.0 C380.6,360.2 384.8,363.3 388.0,365.6 C391.2,367.9 393.3,369.6 396.0,372.0 C398.7,374.4 402.6,377.6 404.4,380.0 C406.2,382.4 404.7,383.6 407.0,386.4 C409.3,389.1 414.3,393.1 418.3,396.5 C422.3,399.9 428.7,403.7 431.0,406.6 C433.3,409.6 432.3,411.0 432.1,414.2 C431.9,417.4 431.0,422.2 429.6,426.0 C428.2,429.8 426.1,433.0 424.0,437.0 C421.9,441.0 419.0,446.2 417.0,450.0 C415.0,453.8 413.9,456.7 412.0,460.0 C410.1,463.3 409.1,465.8 405.8,470.0 C402.5,474.2 398.0,480.5 392.0,485.0 C386.0,489.5 377.2,493.3 370.0,497.0 C362.8,500.7 354.3,503.2 349.0,507.0 C343.7,510.8 342.0,514.5 338.0,520.0 C334.0,525.5 328.8,534.2 325.0,540.0 C321.2,545.8 319.2,550.3 315.0,555.0 C310.8,559.7 305.0,565.2 300.0,568.0 C295.0,570.8 287.5,571.3 285.0,572.0" fill="none" stroke="#e89a22" stroke-width="3.6" stroke-linejoin="round"/>
<path d="M412.0,460.0 C413.6,459.5 415.7,455.0 421.6,457.0 C427.5,459.0 438.9,466.7 447.5,472.0 C456.1,477.3 466.1,483.1 473.5,488.6 C480.9,494.2 484.2,501.3 492.0,505.3 C499.8,509.3 508.7,510.4 520.0,512.7 C531.3,515.0 546.7,517.3 560.0,519.0 C573.3,520.7 589.7,521.7 600.0,523.0 C610.3,524.3 618.3,526.3 622.0,527.0" fill="none" stroke="#e89a22" stroke-width="3.6" stroke-linejoin="round"/>
<path d="M572.0,335.0 C572.0,335.8 573.0,337.5 572.0,340.0 C571.0,342.5 568.1,346.1 566.0,350.0 C563.9,353.9 562.6,358.6 559.4,363.3 C556.2,368.0 550.1,374.4 546.8,378.0 C543.5,381.6 543.1,381.4 539.8,385.0 C536.5,388.6 530.8,394.8 527.2,399.6 C523.6,404.4 520.1,409.4 518.0,414.0 C515.9,418.6 516.2,422.5 514.6,427.4 C513.0,432.2 510.8,437.7 508.3,443.1 C505.8,448.5 502.1,455.1 499.4,460.0 C496.7,464.9 494.2,467.5 492.0,472.5 C489.8,477.5 486.7,484.4 486.0,490.0 C485.3,495.6 487.7,503.3 488.0,506.0" fill="none" stroke="#e89a22" stroke-width="3.6" stroke-linejoin="round"/>
<path d="M572.0,340.0 C572.7,340.9 573.8,344.2 576.0,345.5 C578.2,346.8 582.2,347.5 585.0,348.0 C587.8,348.5 591.0,349.2 593.0,348.6 C595.0,348.0 597.3,345.8 597.0,344.4 C596.7,343.0 592.0,340.7 591.0,340.0" fill="none" stroke="#e89a22" stroke-width="3.6" stroke-linejoin="round"/>
<path d="M40.0,549.0 C44.5,548.8 57.2,547.8 67.0,548.0 C76.8,548.2 87.3,549.8 98.5,550.0 C109.7,550.2 125.2,548.8 134.0,549.0 C142.8,549.2 145.0,550.3 151.0,551.0 C157.0,551.7 163.7,552.3 170.0,553.0 C176.3,553.7 184.0,555.3 189.0,555.0 C194.0,554.7 197.0,552.5 200.0,551.0 C203.0,549.5 204.3,547.7 207.0,546.0 C209.7,544.3 211.5,542.0 216.0,541.0 C220.5,540.0 228.3,538.8 234.0,540.0 C239.7,541.2 245.7,544.7 250.0,548.0 C254.3,551.3 256.7,556.3 260.0,560.0 C263.3,563.7 265.8,568.0 270.0,570.0 C274.2,572.0 280.0,571.8 285.0,572.0 C290.0,572.2 297.5,571.2 300.0,571.0" fill="none" stroke="#e89a22" stroke-width="3.6" stroke-linejoin="round"/>
<path d="M402.5,614.4 C398.8,614.8 387.2,616.1 380.0,617.0 C372.8,617.9 363.4,618.6 359.3,619.6 C355.2,620.6 355.1,621.6 355.2,622.7 C355.3,623.8 357.9,625.0 360.0,626.0 C362.1,627.0 365.9,626.3 367.5,628.8 C369.1,631.3 368.6,636.2 369.6,641.0 C370.6,645.8 370.6,654.2 373.7,657.7 C376.8,661.2 383.9,658.7 388.0,661.8 C392.1,664.9 394.9,672.1 398.4,676.2 C401.8,680.3 405.6,682.2 408.7,686.5 C411.8,690.8 415.1,698.1 417.0,702.0 C418.9,705.9 419.5,708.7 420.0,710.0" fill="none" stroke="#e89a22" stroke-width="3.6" stroke-linejoin="round"/>
<path d="M334.0,335.0 C334.4,335.4 333.6,336.6 336.3,337.3 C339.0,338.0 346.2,337.4 350.2,339.2 C354.2,341.0 357.6,345.8 360.3,348.0 C363.0,350.2 363.8,350.7 366.6,352.4 C369.4,354.1 373.4,355.8 377.0,358.0 C380.6,360.2 384.8,363.3 388.0,365.6 C391.2,367.9 393.3,369.6 396.0,372.0 C398.7,374.4 402.6,377.6 404.4,380.0 C406.2,382.4 404.7,383.6 407.0,386.4 C409.3,389.1 414.3,393.1 418.3,396.5 C422.3,399.9 428.7,403.7 431.0,406.6 C433.3,409.6 432.3,411.0 432.1,414.2 C431.9,417.4 431.0,422.2 429.6,426.0 C428.2,429.8 426.1,433.0 424.0,437.0 C421.9,441.0 419.0,446.2 417.0,450.0 C415.0,453.8 413.9,456.7 412.0,460.0 C410.1,463.3 409.1,465.8 405.8,470.0 C402.5,474.2 398.0,480.5 392.0,485.0 C386.0,489.5 377.2,493.3 370.0,497.0 C362.8,500.7 354.3,503.2 349.0,507.0 C343.7,510.8 342.0,514.5 338.0,520.0 C334.0,525.5 328.8,534.2 325.0,540.0 C321.2,545.8 319.2,550.3 315.0,555.0 C310.8,559.7 305.0,565.2 300.0,568.0 C295.0,570.8 287.5,571.3 285.0,572.0" fill="none" stroke="#f9b844" stroke-width="2.4" stroke-linejoin="round"/>
<path d="M412.0,460.0 C413.6,459.5 415.7,455.0 421.6,457.0 C427.5,459.0 438.9,466.7 447.5,472.0 C456.1,477.3 466.1,483.1 473.5,488.6 C480.9,494.2 484.2,501.3 492.0,505.3 C499.8,509.3 508.7,510.4 520.0,512.7 C531.3,515.0 546.7,517.3 560.0,519.0 C573.3,520.7 589.7,521.7 600.0,523.0 C610.3,524.3 618.3,526.3 622.0,527.0" fill="none" stroke="#f9b844" stroke-width="2.4" stroke-linejoin="round"/>
<path d="M572.0,335.0 C572.0,335.8 573.0,337.5 572.0,340.0 C571.0,342.5 568.1,346.1 566.0,350.0 C563.9,353.9 562.6,358.6 559.4,363.3 C556.2,368.0 550.1,374.4 546.8,378.0 C543.5,381.6 543.1,381.4 539.8,385.0 C536.5,388.6 530.8,394.8 527.2,399.6 C523.6,404.4 520.1,409.4 518.0,414.0 C515.9,418.6 516.2,422.5 514.6,427.4 C513.0,432.2 510.8,437.7 508.3,443.1 C505.8,448.5 502.1,455.1 499.4,460.0 C496.7,464.9 494.2,467.5 492.0,472.5 C489.8,477.5 486.7,484.4 486.0,490.0 C485.3,495.6 487.7,503.3 488.0,506.0" fill="none" stroke="#f9b844" stroke-width="2.4" stroke-linejoin="round"/>
<path d="M572.0,340.0 C572.7,340.9 573.8,344.2 576.0,345.5 C578.2,346.8 582.2,347.5 585.0,348.0 C587.8,348.5 591.0,349.2 593.0,348.6 C595.0,348.0 597.3,345.8 597.0,344.4 C596.7,343.0 592.0,340.7 591.0,340.0" fill="none" stroke="#f9b844" stroke-width="2.4" stroke-linejoin="round"/>
<path d="M40.0,549.0 C44.5,548.8 57.2,547.8 67.0,548.0 C76.8,548.2 87.3,549.8 98.5,550.0 C109.7,550.2 125.2,548.8 134.0,549.0 C142.8,549.2 145.0,550.3 151.0,551.0 C157.0,551.7 163.7,552.3 170.0,553.0 C176.3,553.7 184.0,555.3 189.0,555.0 C194.0,554.7 197.0,552.5 200.0,551.0 C203.0,549.5 204.3,547.7 207.0,546.0 C209.7,544.3 211.5,542.0 216.0,541.0 C220.5,540.0 228.3,538.8 234.0,540.0 C239.7,541.2 245.7,544.7 250.0,548.0 C254.3,551.3 256.7,556.3 260.0,560.0 C263.3,563.7 265.8,568.0 270.0,570.0 C274.2,572.0 280.0,571.8 285.0,572.0 C290.0,572.2 297.5,571.2 300.0,571.0" fill="none" stroke="#f9b844" stroke-width="2.4" stroke-linejoin="round"/>
<path d="M402.5,614.4 C398.8,614.8 387.2,616.1 380.0,617.0 C372.8,617.9 363.4,618.6 359.3,619.6 C355.2,620.6 355.1,621.6 355.2,622.7 C355.3,623.8 357.9,625.0 360.0,626.0 C362.1,627.0 365.9,626.3 367.5,628.8 C369.1,631.3 368.6,636.2 369.6,641.0 C370.6,645.8 370.6,654.2 373.7,657.7 C376.8,661.2 383.9,658.7 388.0,661.8 C392.1,664.9 394.9,672.1 398.4,676.2 C401.8,680.3 405.6,682.2 408.7,686.5 C411.8,690.8 415.1,698.1 417.0,702.0 C418.9,705.9 419.5,708.7 420.0,710.0" fill="none" stroke="#f9b844" stroke-width="2.4" stroke-linejoin="round"/>
<text x="476.7" y="338.5" font-size="11" fill="#1a1a1a" text-anchor="start" stroke="#fff" stroke-width="2.5" paint-order="stroke" stroke-linejoin="round">Cheval</text>
<text x="563.4" y="338.5" font-size="11" fill="#1a1a1a" text-anchor="start" stroke="#fff" stroke-width="2.5" paint-order="stroke" stroke-linejoin="round">Bois Dormo</text>
<text x="594" y="360" font-size="11" fill="#1a1a1a" text-anchor="start" stroke="#fff" stroke-width="2.5" paint-order="stroke" stroke-linejoin="round">Trou</text>
<text x="586" y="372" font-size="11" fill="#1a1a1a" text-anchor="start" stroke="#fff" stroke-width="2.5" paint-order="stroke" stroke-linejoin="round">Calmar</text>
<text x="589" y="387.5" font-size="11" fill="#1a1a1a" text-anchor="start" stroke="#fff" stroke-width="2.5" paint-order="stroke" stroke-linejoin="round">Dum</text>
<text x="516" y="482" font-size="11" fill="#1a1a1a" text-anchor="start" stroke="#fff" stroke-width="2.5" paint-order="stroke" stroke-linejoin="round">Dieura</text>
<text x="604" y="490" font-size="11" fill="#1a1a1a" text-anchor="start" stroke="#fff" stroke-width="2.5" paint-order="stroke" stroke-linejoin="round">Dro</text>
<text x="437.3" y="505.3" font-size="10.9" fill="#1a1a1a" text-anchor="start" stroke="#fff" stroke-width="2.5" paint-order="stroke" stroke-linejoin="round">Croix-des-Bouquets</text>
<text x="574.5" y="516.5" font-size="11" fill="#1a1a1a" text-anchor="start" stroke="#fff" stroke-width="2.5" paint-order="stroke" stroke-linejoin="round">Nan</text>
<text x="562.6" y="528" font-size="10.6" fill="#1a1a1a" text-anchor="start" stroke="#fff" stroke-width="2.5" paint-order="stroke" stroke-linejoin="round">Cadastre</text>
<text x="612" y="521.7" font-size="11" fill="#1a1a1a" text-anchor="start" stroke="#fff" stroke-width="2.5" paint-order="stroke" stroke-linejoin="round">C</text>
<text x="516.4" y="533" font-size="10.2" fill="#1a1a1a" text-anchor="start" stroke="#fff" stroke-width="2.5" paint-order="stroke" stroke-linejoin="round">Dleudon</text>
<text x="477.5" y="541.7" font-size="11" fill="#1a1a1a" text-anchor="start" stroke="#fff" stroke-width="2.5" paint-order="stroke" stroke-linejoin="round">Digner</text>
<text x="540.5" y="561.6" font-size="10.6" fill="#1a1a1a" text-anchor="start" stroke="#fff" stroke-width="2.5" paint-order="stroke" stroke-linejoin="round">Gaman</text>
<text x="586.3" y="558.5" font-size="10.8" fill="#1a1a1a" text-anchor="start" stroke="#fff" stroke-width="2.5" paint-order="stroke" stroke-linejoin="round">Delmar</text>
<text x="537.4" y="582.6" font-size="10.3" fill="#1a1a1a" text-anchor="start" stroke="#fff" stroke-width="2.5" paint-order="stroke" stroke-linejoin="round">La Hatte</text>
<text x="534.2" y="593" font-size="10.4" fill="#1a1a1a" text-anchor="start" stroke="#fff" stroke-width="2.5" paint-order="stroke" stroke-linejoin="round">Droullfard</text>
<text x="598.3" y="584.7" font-size="11" fill="#1a1a1a" text-anchor="start" stroke="#fff" stroke-width="2.5" paint-order="stroke" stroke-linejoin="round">Jong</text>
<text x="514.3" y="611" font-size="10.8" fill="#1a1a1a" text-anchor="start" stroke="#fff" stroke-width="2.5" paint-order="stroke" stroke-linejoin="round">Dumay</text>
<text x="594" y="624.6" font-size="11" fill="#1a1a1a" text-anchor="start" stroke="#fff" stroke-width="2.5" paint-order="stroke" stroke-linejoin="round">Mome</text>
<text x="591" y="636" font-size="11" fill="#1a1a1a" text-anchor="start" stroke="#fff" stroke-width="2.5" paint-order="stroke" stroke-linejoin="round">Chauc</text>
<text x="596" y="668.6" font-size="11" fill="#1a1a1a" text-anchor="start" stroke="#fff" stroke-width="2.5" paint-order="stroke" stroke-linejoin="round">Boldi</text>
<text x="613.8" y="703" font-size="11" fill="#1a1a1a" text-anchor="start" stroke="#fff" stroke-width="2.5" paint-order="stroke" stroke-linejoin="round">E</text>
<text x="424.4" y="463.6" font-size="10.8" fill="#1a1a1a" text-anchor="start" stroke="#fff" stroke-width="2.5" paint-order="stroke" stroke-linejoin="round">Santo</text>
<text x="411" y="419" font-size="10.5" fill="#1a1a1a" text-anchor="start" stroke="#fff" stroke-width="2.5" paint-order="stroke" stroke-linejoin="round">Bon Repos</text>
<text x="414" y="488.6" font-size="10.5" fill="#1a1a1a" text-anchor="start" stroke="#fff" stroke-width="2.5" paint-order="stroke" stroke-linejoin="round">Cazeau</text>
<text x="311" y="502.4" font-size="10.8" fill="#1a1a1a" text-anchor="start" stroke="#fff" stroke-width="2.5" paint-order="stroke" stroke-linejoin="round">Cité Soleil</text>
<text x="332" y="519.2" font-size="10.5" fill="#1a1a1a" text-anchor="start" stroke="#fff" stroke-width="2.5" paint-order="stroke" stroke-linejoin="round">Village W.</text>
<text x="331" y="529.7" font-size="10.8" fill="#1a1a1a" text-anchor="start" stroke="#fff" stroke-width="2.5" paint-order="stroke" stroke-linejoin="round">Lamothe</text>
<text x="392" y="523" font-size="9.8" fill="#1a1a1a" text-anchor="start" stroke="#fff" stroke-width="2.5" paint-order="stroke" stroke-linejoin="round">Mais Gate</text>
<text x="411" y="550.5" font-size="10.5" fill="#1a1a1a" text-anchor="start" stroke="#fff" stroke-width="2.5" paint-order="stroke" stroke-linejoin="round">Bois</text>
<text x="397" y="560.3" font-size="10.5" fill="#1a1a1a" text-anchor="start" stroke="#fff" stroke-width="2.5" paint-order="stroke" stroke-linejoin="round">Caradeaux</text>
<text x="404.8" y="575.7" font-size="10.5" fill="#1a1a1a" text-anchor="start" stroke="#fff" stroke-width="2.5" paint-order="stroke" stroke-linejoin="round">Frères</text>
<text x="379.6" y="603" font-size="11.4" fill="#1a1a1a" text-anchor="start" stroke="#fff" stroke-width="2.5" paint-order="stroke" stroke-linejoin="round">Pétion-Ville</text>
<text x="298.8" y="576.2" font-size="10" fill="#1a1a1a" text-anchor="start" stroke="#fff" stroke-width="2.5" paint-order="stroke" stroke-linejoin="round">Bizoton</text>
<text x="248.3" y="556" font-size="13" fill="#1a1a1a" text-anchor="start" stroke="#fff" stroke-width="2.5" paint-order="stroke" stroke-linejoin="round">Port-au-Prince</text>
<text x="199.4" y="587" font-size="13" fill="#1a1a1a" text-anchor="start" stroke="#fff" stroke-width="2.5" paint-order="stroke" stroke-linejoin="round">Carrefour</text>
<text x="46" y="559" font-size="11" fill="#1a1a1a" text-anchor="start" stroke="#fff" stroke-width="2.5" paint-order="stroke" stroke-linejoin="round">ssier</text>
<text x="45" y="598" font-size="11" fill="#1a1a1a" text-anchor="start" stroke="#fff" stroke-width="2.5" paint-order="stroke" stroke-linejoin="round">s</text>
<text x="45" y="625" font-size="11" fill="#1a1a1a" text-anchor="start" stroke="#fff" stroke-width="2.5" paint-order="stroke" stroke-linejoin="round">e</text>
<text x="46" y="663.8" font-size="11" fill="#1a1a1a" text-anchor="start" stroke="#fff" stroke-width="2.5" paint-order="stroke" stroke-linejoin="round">yette</text>
<text x="198.4" y="678" font-size="10.5" fill="#1a1a1a" text-anchor="start" stroke="#fff" stroke-width="2.5" paint-order="stroke" stroke-linejoin="round">Chauflard</text>
<text x="346" y="645.7" font-size="11" fill="#1a1a1a" text-anchor="start" stroke="#fff" stroke-width="2.5" paint-order="stroke" stroke-linejoin="round">Fermate</text>
<text x="383.6" y="697.8" font-size="11" fill="#1a1a1a" text-anchor="start" stroke="#fff" stroke-width="2.5" paint-order="stroke" stroke-linejoin="round">Kenscoff</text>
<text x="362.2" y="489.5" font-size="10.5" fill="#444" text-anchor="start" stroke="#fff" stroke-width="2.5" paint-order="stroke" stroke-linejoin="round">Sarthe</text>
<text x="540.5" y="500.7" font-size="9.5" fill="#555" text-anchor="start" stroke="#fff" stroke-width="2.5" paint-order="stroke" stroke-linejoin="round">Balbas</text>
<text x="152" y="673" font-size="9.5" fill="#444" text-anchor="start" stroke="#fff" stroke-width="2.5" paint-order="stroke" stroke-linejoin="round">Henry</text>
<text x="591" y="409.5" font-size="11" fill="#2a3760" text-anchor="start" stroke="#fff" stroke-width="2.5" paint-order="stroke" stroke-linejoin="round">Trou</text>
<text x="583.6" y="420" font-size="11" fill="#2a3760" text-anchor="start" stroke="#fff" stroke-width="2.5" paint-order="stroke" stroke-linejoin="round">Caïman</text>
<text x="184.7" y="422.6" font-size="12" fill="#1f2a55" text-anchor="middle" stroke="#fff" stroke-width="2.5" paint-order="stroke" stroke-linejoin="round">Baie de</text>
<text x="184.7" y="435.8" font-size="12" fill="#1f2a55" text-anchor="middle" stroke="#fff" stroke-width="2.5" paint-order="stroke" stroke-linejoin="round">Port-au-Prince</text>
<rect x="367.5" y="353.5" width="22.0" height="11.0" fill="#fdf27b" stroke="#e3b93a" stroke-width="1"/>
<text x="378.5" y="362.0" font-size="10" font-weight="bold" fill="#111" text-anchor="middle">100</text>
<rect x="387.5" y="367.5" width="17.0" height="11.0" fill="#fdf27b" stroke="#e3b93a" stroke-width="1"/>
<text x="396.0" y="376.0" font-size="10" font-weight="bold" fill="#111" text-anchor="middle">1</text>
<rect x="412.5" y="430.5" width="21.0" height="11.0" fill="#fdf27b" stroke="#e3b93a" stroke-width="1"/>
<text x="423.0" y="439.0" font-size="10" font-weight="bold" fill="#111" text-anchor="middle">100</text>
<rect x="404.5" y="454.5" width="17.0" height="11.0" fill="#fdf27b" stroke="#e3b93a" stroke-width="1"/>
<text x="413.0" y="463.0" font-size="10" font-weight="bold" fill="#111" text-anchor="middle">1</text>
<rect x="451.5" y="478.0" width="22.0" height="11.5" fill="#fdf27b" stroke="#e3b93a" stroke-width="1"/>
<text x="462.5" y="487.0" font-size="10" font-weight="bold" fill="#111" text-anchor="middle">300</text>
<rect x="513.1" y="401.2" width="20.6" height="11.3" fill="#fdf27b" stroke="#e3b93a" stroke-width="1"/>
<text x="523.4" y="410.0" font-size="10" font-weight="bold" fill="#111" text-anchor="middle">300</text>
<rect x="509.5" y="414.5" width="17.5" height="11.0" fill="#fdf27b" stroke="#e3b93a" stroke-width="1"/>
<text x="518.2" y="423.0" font-size="10" font-weight="bold" fill="#111" text-anchor="middle">3</text>
<rect x="550.9" y="350.8" width="17.6" height="11.7" fill="#fdf27b" stroke="#e3b93a" stroke-width="1"/>
<text x="559.7" y="360.0" font-size="10" font-weight="bold" fill="#111" text-anchor="middle">3</text>
<rect x="81.2" y="546.0" width="16.8" height="11.0" fill="#fdf27b" stroke="#e3b93a" stroke-width="1"/>
<text x="89.6" y="554.5" font-size="10" font-weight="bold" fill="#111" text-anchor="middle">2</text>
<rect x="108.9" y="546.8" width="21.3" height="11.2" fill="#fdf27b" stroke="#e3b93a" stroke-width="1"/>
<text x="119.5" y="555.5" font-size="10" font-weight="bold" fill="#111" text-anchor="middle">200</text>
<rect x="191.9" y="548.5" width="21.0" height="10.5" fill="#fdf27b" stroke="#e3b93a" stroke-width="1"/>
<text x="202.4" y="556.5" font-size="10" font-weight="bold" fill="#111" text-anchor="middle">200</text>
<rect x="217.1" y="536.3" width="16.8" height="10.2" fill="#fdf27b" stroke="#e3b93a" stroke-width="1"/>
<text x="225.5" y="544.0" font-size="10" font-weight="bold" fill="#111" text-anchor="middle">2</text>
<rect x="274.0" y="563.8" width="21.5" height="11.2" fill="#fdf27b" stroke="#e3b93a" stroke-width="1"/>
<text x="284.8" y="572.5" font-size="10" font-weight="bold" fill="#111" text-anchor="middle">200</text>
<rect x="382.5" y="664.3" width="21.6" height="11.2" fill="#fdf27b" stroke="#e3b93a" stroke-width="1"/>
<text x="393.3" y="673.0" font-size="10" font-weight="bold" fill="#111" text-anchor="middle">101</text>
<circle cx="430.9" cy="414.8" r="6.3" fill="#cc0000" fill-opacity="0.8" stroke="#d00000" stroke-width="1.8"/>
<circle cx="440.5" cy="429.5" r="6.3" fill="#cc0000" fill-opacity="0.8" stroke="#d00000" stroke-width="1.8"/>
<circle cx="325.9" cy="447.3" r="6.3" fill="#cc0000" fill-opacity="0.8" stroke="#d00000" stroke-width="1.8"/>
<circle cx="329.0" cy="478.7" r="6.3" fill="#cc0000" fill-opacity="0.8" stroke="#d00000" stroke-width="1.8"/>
<circle cx="328.5" cy="481.4" r="6.3" fill="#cc0000" fill-opacity="0.8" stroke="#d00000" stroke-width="1.8"/>
<circle cx="331.3" cy="498.2" r="6.3" fill="#cc0000" fill-opacity="0.8" stroke="#d00000" stroke-width="1.8"/>
<circle cx="340.4" cy="498.9" r="6.3" fill="#cc0000" fill-opacity="0.8" stroke="#d00000" stroke-width="1.8"/>
<circle cx="324.3" cy="509.4" r="6.3" fill="#cc0000" fill-opacity="0.8" stroke="#d00000" stroke-width="1.8"/>
<circle cx="332.7" cy="511.5" r="6.3" fill="#cc0000" fill-opacity="0.8" stroke="#d00000" stroke-width="1.8"/>
<circle cx="342.5" cy="510.8" r="6.3" fill="#cc0000" fill-opacity="0.8" stroke="#d00000" stroke-width="1.8"/>
<circle cx="311.0" cy="520.6" r="6.3" fill="#cc0000" fill-opacity="0.8" stroke="#d00000" stroke-width="1.8"/>
<circle cx="327.1" cy="526.2" r="6.3" fill="#cc0000" fill-opacity="0.8" stroke="#d00000" stroke-width="1.8"/>
<circle cx="338.3" cy="529.7" r="6.3" fill="#cc0000" fill-opacity="0.8" stroke="#d00000" stroke-width="1.8"/>
<circle cx="307.5" cy="533.2" r="6.3" fill="#cc0000" fill-opacity="0.8" stroke="#d00000" stroke-width="1.8"/>
<circle cx="313.8" cy="534.6" r="6.3" fill="#cc0000" fill-opacity="0.8" stroke="#d00000" stroke-width="1.8"/>
<circle cx="294.2" cy="538.8" r="6.3" fill="#cc0000" fill-opacity="0.8" stroke="#d00000" stroke-width="1.8"/>
<circle cx="326.4" cy="538.8" r="6.3" fill="#cc0000" fill-opacity="0.8" stroke="#d00000" stroke-width="1.8"/>
<circle cx="334.8" cy="538.8" r="6.3" fill="#cc0000" fill-opacity="0.8" stroke="#d00000" stroke-width="1.8"/>
<circle cx="315.2" cy="545.8" r="6.3" fill="#cc0000" fill-opacity="0.8" stroke="#d00000" stroke-width="1.8"/>
<circle cx="323.6" cy="547.2" r="6.3" fill="#cc0000" fill-opacity="0.8" stroke="#d00000" stroke-width="1.8"/>
<circle cx="332.0" cy="550.0" r="6.3" fill="#cc0000" fill-opacity="0.8" stroke="#d00000" stroke-width="1.8"/>
<circle cx="346.0" cy="545.8" r="6.3" fill="#cc0000" fill-opacity="0.8" stroke="#d00000" stroke-width="1.8"/>
<circle cx="353.0" cy="541.6" r="6.3" fill="#cc0000" fill-opacity="0.8" stroke="#d00000" stroke-width="1.8"/>
<circle cx="361.4" cy="540.2" r="6.3" fill="#cc0000" fill-opacity="0.8" stroke="#d00000" stroke-width="1.8"/>
<circle cx="376.1" cy="545.8" r="6.3" fill="#cc0000" fill-opacity="0.8" stroke="#d00000" stroke-width="1.8"/>
<circle cx="377.5" cy="551.4" r="6.3" fill="#cc0000" fill-opacity="0.8" stroke="#d00000" stroke-width="1.8"/>
<circle cx="381.0" cy="527.6" r="6.3" fill="#cc0000" fill-opacity="0.8" stroke="#d00000" stroke-width="1.8"/>
<circle cx="385.2" cy="530.4" r="6.3" fill="#cc0000" fill-opacity="0.8" stroke="#d00000" stroke-width="1.8"/>
<circle cx="382.4" cy="501.0" r="6.3" fill="#cc0000" fill-opacity="0.8" stroke="#d00000" stroke-width="1.8"/>
<circle cx="388.0" cy="503.8" r="6.3" fill="#cc0000" fill-opacity="0.8" stroke="#d00000" stroke-width="1.8"/>
<circle cx="319.4" cy="558.4" r="6.3" fill="#cc0000" fill-opacity="0.8" stroke="#d00000" stroke-width="1.8"/>
<circle cx="326.4" cy="561.2" r="6.3" fill="#cc0000" fill-opacity="0.8" stroke="#d00000" stroke-width="1.8"/>
<circle cx="339.0" cy="558.4" r="6.3" fill="#cc0000" fill-opacity="0.8" stroke="#d00000" stroke-width="1.8"/>
<circle cx="348.8" cy="552.8" r="6.3" fill="#cc0000" fill-opacity="0.8" stroke="#d00000" stroke-width="1.8"/>
<circle cx="358.6" cy="555.6" r="6.3" fill="#cc0000" fill-opacity="0.8" stroke="#d00000" stroke-width="1.8"/>
<circle cx="360.0" cy="564.0" r="6.3" fill="#cc0000" fill-opacity="0.8" stroke="#d00000" stroke-width="1.8"/>
<circle cx="348.8" cy="566.8" r="6.3" fill="#cc0000" fill-opacity="0.8" stroke="#d00000" stroke-width="1.8"/>
<circle cx="336.2" cy="569.6" r="6.3" fill="#cc0000" fill-opacity="0.8" stroke="#d00000" stroke-width="1.8"/>
<circle cx="325.0" cy="569.6" r="6.3" fill="#cc0000" fill-opacity="0.8" stroke="#d00000" stroke-width="1.8"/>
<circle cx="308.2" cy="564.0" r="6.3" fill="#cc0000" fill-opacity="0.8" stroke="#d00000" stroke-width="1.8"/>
<circle cx="311.0" cy="572.4" r="6.3" fill="#cc0000" fill-opacity="0.8" stroke="#d00000" stroke-width="1.8"/>
<circle cx="374.0" cy="566.8" r="6.3" fill="#cc0000" fill-opacity="0.8" stroke="#d00000" stroke-width="1.8"/>
<circle cx="385.2" cy="561.2" r="6.3" fill="#cc0000" fill-opacity="0.8" stroke="#d00000" stroke-width="1.8"/>
<circle cx="386.6" cy="569.6" r="6.3" fill="#cc0000" fill-opacity="0.8" stroke="#d00000" stroke-width="1.8"/>
<circle cx="319.4" cy="576.6" r="6.3" fill="#cc0000" fill-opacity="0.8" stroke="#d00000" stroke-width="1.8"/>
<circle cx="332.0" cy="576.6" r="6.3" fill="#cc0000" fill-opacity="0.8" stroke="#d00000" stroke-width="1.8"/>
<circle cx="346.0" cy="575.2" r="6.3" fill="#cc0000" fill-opacity="0.8" stroke="#d00000" stroke-width="1.8"/>
<circle cx="312.2" cy="581.6" r="6.3" fill="#cc0000" fill-opacity="0.8" stroke="#d00000" stroke-width="1.8"/>
<circle cx="326.9" cy="579.5" r="6.3" fill="#cc0000" fill-opacity="0.8" stroke="#d00000" stroke-width="1.8"/>
<circle cx="321.6" cy="602.6" r="6.3" fill="#cc0000" fill-opacity="0.8" stroke="#d00000" stroke-width="1.8"/>
<circle cx="333.8" cy="606.8" r="6.3" fill="#cc0000" fill-opacity="0.8" stroke="#d00000" stroke-width="1.8"/>
<circle cx="346.8" cy="605.7" r="6.3" fill="#cc0000" fill-opacity="0.8" stroke="#d00000" stroke-width="1.8"/>
<circle cx="267.0" cy="573.2" r="6.3" fill="#cc0000" fill-opacity="0.8" stroke="#d00000" stroke-width="1.8"/>
<circle cx="277.5" cy="586.4" r="6.3" fill="#cc0000" fill-opacity="0.8" stroke="#d00000" stroke-width="1.8"/>
<circle cx="270.2" cy="598.4" r="6.3" fill="#cc0000" fill-opacity="0.8" stroke="#d00000" stroke-width="1.8"/>
<circle cx="362.8" cy="542.8" r="6.3" fill="#cc0000" fill-opacity="0.8" stroke="#d00000" stroke-width="1.8"/>
<circle cx="376.8" cy="550.5" r="6.3" fill="#cc0000" fill-opacity="0.8" stroke="#d00000" stroke-width="1.8"/>
<circle cx="375.4" cy="556.8" r="6.3" fill="#cc0000" fill-opacity="0.8" stroke="#d00000" stroke-width="1.8"/>
<circle cx="362.8" cy="565.2" r="6.3" fill="#cc0000" fill-opacity="0.8" stroke="#d00000" stroke-width="1.8"/>
<circle cx="391.5" cy="562.4" r="6.3" fill="#cc0000" fill-opacity="0.8" stroke="#d00000" stroke-width="1.8"/>
<circle cx="396.4" cy="567.3" r="6.3" fill="#cc0000" fill-opacity="0.8" stroke="#d00000" stroke-width="1.8"/>
<circle cx="374.0" cy="570.0" r="6.3" fill="#cc0000" fill-opacity="0.8" stroke="#d00000" stroke-width="1.8"/>
<circle cx="385.2" cy="577.8" r="6.3" fill="#cc0000" fill-opacity="0.8" stroke="#d00000" stroke-width="1.8"/>
<circle cx="393.6" cy="582.0" r="6.3" fill="#cc0000" fill-opacity="0.8" stroke="#d00000" stroke-width="1.8"/>
<circle cx="404.8" cy="580.6" r="6.3" fill="#cc0000" fill-opacity="0.8" stroke="#d00000" stroke-width="1.8"/>
<circle cx="381.0" cy="589.7" r="6.3" fill="#cc0000" fill-opacity="0.8" stroke="#d00000" stroke-width="1.8"/>
<circle cx="418.8" cy="586.2" r="6.3" fill="#cc0000" fill-opacity="0.8" stroke="#d00000" stroke-width="1.8"/>
<circle cx="420.2" cy="596.0" r="6.3" fill="#cc0000" fill-opacity="0.8" stroke="#d00000" stroke-width="1.8"/>
<circle cx="425.8" cy="577.1" r="6.3" fill="#cc0000" fill-opacity="0.8" stroke="#d00000" stroke-width="1.8"/>
<circle cx="441.9" cy="569.4" r="6.3" fill="#cc0000" fill-opacity="0.8" stroke="#d00000" stroke-width="1.8"/>
<circle cx="441.9" cy="578.5" r="6.3" fill="#cc0000" fill-opacity="0.8" stroke="#d00000" stroke-width="1.8"/>
<circle cx="402.0" cy="598.8" r="6.3" fill="#cc0000" fill-opacity="0.8" stroke="#d00000" stroke-width="1.8"/>
<circle cx="407.6" cy="601.6" r="6.3" fill="#cc0000" fill-opacity="0.8" stroke="#d00000" stroke-width="1.8"/>
<circle cx="403.4" cy="605.8" r="6.3" fill="#cc0000" fill-opacity="0.8" stroke="#d00000" stroke-width="1.8"/>
<circle cx="409.0" cy="616.3" r="6.3" fill="#cc0000" fill-opacity="0.8" stroke="#d00000" stroke-width="1.8"/>
<circle cx="382.4" cy="624.7" r="6.3" fill="#cc0000" fill-opacity="0.8" stroke="#d00000" stroke-width="1.8"/>
<circle cx="362.8" cy="637.3" r="6.3" fill="#cc0000" fill-opacity="0.8" stroke="#d00000" stroke-width="1.8"/>
<circle cx="428.0" cy="483.0" r="6.3" fill="#cc0000" fill-opacity="0.8" stroke="#d00000" stroke-width="1.8"/>
<circle cx="431.8" cy="491.4" r="6.3" fill="#cc0000" fill-opacity="0.8" stroke="#d00000" stroke-width="1.8"/>
<circle cx="490.2" cy="482.0" r="6.3" fill="#cc0000" fill-opacity="0.8" stroke="#d00000" stroke-width="1.8"/>
<circle cx="484.6" cy="494.2" r="6.3" fill="#cc0000" fill-opacity="0.8" stroke="#d00000" stroke-width="1.8"/>
<circle cx="470.7" cy="507.1" r="6.3" fill="#cc0000" fill-opacity="0.8" stroke="#d00000" stroke-width="1.8"/>
<circle cx="387.0" cy="494.0" r="6.3" fill="#cc0000" fill-opacity="0.8" stroke="#d00000" stroke-width="1.8"/>
<circle cx="395.0" cy="497.0" r="6.3" fill="#cc0000" fill-opacity="0.8" stroke="#d00000" stroke-width="1.8"/>
<circle cx="403.0" cy="498.0" r="6.3" fill="#cc0000" fill-opacity="0.8" stroke="#d00000" stroke-width="1.8"/>
<circle cx="392.0" cy="505.0" r="6.3" fill="#cc0000" fill-opacity="0.8" stroke="#d00000" stroke-width="1.8"/>
<circle cx="400.0" cy="505.0" r="6.3" fill="#cc0000" fill-opacity="0.8" stroke="#d00000" stroke-width="1.8"/>
<circle cx="343.7" cy="497.9" r="6.3" fill="#cc0000" fill-opacity="0.8" stroke="#d00000" stroke-width="1.8"/>
<circle cx="343.7" cy="510.8" r="6.3" fill="#cc0000" fill-opacity="0.8" stroke="#d00000" stroke-width="1.8"/>
<circle cx="382.6" cy="525.7" r="6.3" fill="#cc0000" fill-opacity="0.8" stroke="#d00000" stroke-width="1.8"/>
<circle cx="390.0" cy="529.4" r="6.3" fill="#cc0000" fill-opacity="0.8" stroke="#d00000" stroke-width="1.8"/>
<circle cx="358.5" cy="536.8" r="6.3" fill="#cc0000" fill-opacity="0.8" stroke="#d00000" stroke-width="1.8"/>
<circle cx="380.5" cy="499.7" r="6.3" fill="#cc0000" fill-opacity="0.8" stroke="#d00000" stroke-width="1.8"/>
<circle cx="391.0" cy="496.5" r="6.3" fill="#cc0000" fill-opacity="0.8" stroke="#d00000" stroke-width="1.8"/>
<circle cx="393.0" cy="502.8" r="6.3" fill="#cc0000" fill-opacity="0.8" stroke="#d00000" stroke-width="1.8"/>
<circle cx="403.6" cy="497.6" r="6.3" fill="#cc0000" fill-opacity="0.8" stroke="#d00000" stroke-width="1.8"/>
<circle cx="67.0" cy="542.7" r="6.3" fill="#cc0000" fill-opacity="0.8" stroke="#d00000" stroke-width="1.8"/>
<circle cx="50.2" cy="560.6" r="6.3" fill="#cc0000" fill-opacity="0.8" stroke="#d00000" stroke-width="1.8"/>
<circle cx="156.9" cy="560.6" r="6.3" fill="#cc0000" fill-opacity="0.8" stroke="#d00000" stroke-width="1.8"/>
<circle cx="185.7" cy="578.4" r="6.3" fill="#cc0000" fill-opacity="0.8" stroke="#d00000" stroke-width="1.8"/>
<circle cx="153.8" cy="598.8" r="6.3" fill="#cc0000" fill-opacity="0.8" stroke="#d00000" stroke-width="1.8"/>
<circle cx="194.0" cy="618.4" r="6.3" fill="#cc0000" fill-opacity="0.8" stroke="#d00000" stroke-width="1.8"/>
<circle cx="229.8" cy="594.2" r="6.3" fill="#cc0000" fill-opacity="0.8" stroke="#d00000" stroke-width="1.8"/>
<circle cx="237.2" cy="593.0" r="6.3" fill="#cc0000" fill-opacity="0.8" stroke="#d00000" stroke-width="1.8"/>
<circle cx="220.2" cy="547.4" r="6.3" fill="#cc0000" fill-opacity="0.8" stroke="#d00000" stroke-width="1.8"/>
<circle cx="225.2" cy="551.0" r="6.3" fill="#cc0000" fill-opacity="0.8" stroke="#d00000" stroke-width="1.8"/>
<circle cx="228.0" cy="566.0" r="6.3" fill="#cc0000" fill-opacity="0.8" stroke="#d00000" stroke-width="1.8"/>
<circle cx="222.0" cy="578.0" r="6.3" fill="#cc0000" fill-opacity="0.8" stroke="#d00000" stroke-width="1.8"/>
<circle cx="230.0" cy="556.0" r="6.3" fill="#cc0000" fill-opacity="0.8" stroke="#d00000" stroke-width="1.8"/>
<circle cx="239.0" cy="543.8" r="6.3" fill="#cc0000" fill-opacity="0.8" stroke="#d00000" stroke-width="1.8"/>
<circle cx="238.2" cy="551.7" r="6.3" fill="#cc0000" fill-opacity="0.8" stroke="#d00000" stroke-width="1.8"/>
<circle cx="226.0" cy="561.8" r="6.3" fill="#cc0000" fill-opacity="0.8" stroke="#d00000" stroke-width="1.8"/>
<circle cx="216.6" cy="570.5" r="6.3" fill="#cc0000" fill-opacity="0.8" stroke="#d00000" stroke-width="1.8"/>
<circle cx="225.2" cy="573.3" r="6.3" fill="#cc0000" fill-opacity="0.8" stroke="#d00000" stroke-width="1.8"/>
<circle cx="266.3" cy="573.3" r="6.3" fill="#cc0000" fill-opacity="0.8" stroke="#d00000" stroke-width="1.8"/>
<circle cx="228.8" cy="595.0" r="6.3" fill="#cc0000" fill-opacity="0.8" stroke="#d00000" stroke-width="1.8"/>
<circle cx="236.8" cy="593.5" r="6.3" fill="#cc0000" fill-opacity="0.8" stroke="#d00000" stroke-width="1.8"/>
<circle cx="293.7" cy="538.7" r="6.3" fill="#cc0000" fill-opacity="0.8" stroke="#d00000" stroke-width="1.8"/>
<circle cx="309.6" cy="524.3" r="6.3" fill="#cc0000" fill-opacity="0.8" stroke="#d00000" stroke-width="1.8"/>
<circle cx="306.7" cy="533.7" r="6.3" fill="#cc0000" fill-opacity="0.8" stroke="#d00000" stroke-width="1.8"/>
<circle cx="330.0" cy="642.8" r="6.3" fill="#cc0000" fill-opacity="0.8" stroke="#d00000" stroke-width="1.8"/>
<circle cx="363.0" cy="639.0" r="6.3" fill="#cc0000" fill-opacity="0.8" stroke="#d00000" stroke-width="1.8"/>
<circle cx="365.9" cy="651.0" r="6.3" fill="#cc0000" fill-opacity="0.8" stroke="#d00000" stroke-width="1.8"/>
<circle cx="219.0" cy="672.0" r="6.3" fill="#cc0000" fill-opacity="0.8" stroke="#d00000" stroke-width="1.8"/>
<circle cx="402.5" cy="695.8" r="6.3" fill="#cc0000" fill-opacity="0.8" stroke="#d00000" stroke-width="1.8"/>
<circle cx="321.2" cy="603.0" r="6.3" fill="#cc0000" fill-opacity="0.8" stroke="#d00000" stroke-width="1.8"/>
<circle cx="347.0" cy="606.2" r="6.3" fill="#cc0000" fill-opacity="0.8" stroke="#d00000" stroke-width="1.8"/>
<circle cx="316.0" cy="541.1" r="6.3" fill="#cc0000" fill-opacity="0.8" stroke="#d00000" stroke-width="1.8"/>
<circle cx="317.2" cy="549.9" r="6.3" fill="#cc0000" fill-opacity="0.8" stroke="#d00000" stroke-width="1.8"/>
<circle cx="316.9" cy="558.0" r="6.3" fill="#cc0000" fill-opacity="0.8" stroke="#d00000" stroke-width="1.8"/>
<circle cx="315.9" cy="566.9" r="6.3" fill="#cc0000" fill-opacity="0.8" stroke="#d00000" stroke-width="1.8"/>
<circle cx="322.9" cy="540.6" r="6.3" fill="#cc0000" fill-opacity="0.8" stroke="#d00000" stroke-width="1.8"/>
<circle cx="323.6" cy="550.3" r="6.3" fill="#cc0000" fill-opacity="0.8" stroke="#d00000" stroke-width="1.8"/>
<circle cx="322.5" cy="558.6" r="6.3" fill="#cc0000" fill-opacity="0.8" stroke="#d00000" stroke-width="1.8"/>
<circle cx="324.7" cy="565.4" r="6.3" fill="#cc0000" fill-opacity="0.8" stroke="#d00000" stroke-width="1.8"/>
<circle cx="322.7" cy="571.6" r="6.3" fill="#cc0000" fill-opacity="0.8" stroke="#d00000" stroke-width="1.8"/>
<circle cx="330.9" cy="532.4" r="6.3" fill="#cc0000" fill-opacity="0.8" stroke="#d00000" stroke-width="1.8"/>
<circle cx="332.6" cy="542.9" r="6.3" fill="#cc0000" fill-opacity="0.8" stroke="#d00000" stroke-width="1.8"/>
<circle cx="330.9" cy="548.3" r="6.3" fill="#cc0000" fill-opacity="0.8" stroke="#d00000" stroke-width="1.8"/>
<circle cx="330.9" cy="558.5" r="6.3" fill="#cc0000" fill-opacity="0.8" stroke="#d00000" stroke-width="1.8"/>
<circle cx="330.2" cy="566.1" r="6.3" fill="#cc0000" fill-opacity="0.8" stroke="#d00000" stroke-width="1.8"/>
<circle cx="333.5" cy="572.5" r="6.3" fill="#cc0000" fill-opacity="0.8" stroke="#d00000" stroke-width="1.8"/>
<circle cx="341.5" cy="541.4" r="6.3" fill="#cc0000" fill-opacity="0.8" stroke="#d00000" stroke-width="1.8"/>
<circle cx="339.4" cy="549.2" r="6.3" fill="#cc0000" fill-opacity="0.8" stroke="#d00000" stroke-width="1.8"/>
<circle cx="339.4" cy="556.0" r="6.3" fill="#cc0000" fill-opacity="0.8" stroke="#d00000" stroke-width="1.8"/>
<circle cx="338.7" cy="563.9" r="6.3" fill="#cc0000" fill-opacity="0.8" stroke="#d00000" stroke-width="1.8"/>
<circle cx="339.9" cy="572.0" r="6.3" fill="#cc0000" fill-opacity="0.8" stroke="#d00000" stroke-width="1.8"/>
<circle cx="347.4" cy="539.7" r="6.3" fill="#cc0000" fill-opacity="0.8" stroke="#d00000" stroke-width="1.8"/>
<circle cx="347.0" cy="550.3" r="6.3" fill="#cc0000" fill-opacity="0.8" stroke="#d00000" stroke-width="1.8"/>
<circle cx="348.7" cy="557.2" r="6.3" fill="#cc0000" fill-opacity="0.8" stroke="#d00000" stroke-width="1.8"/>
<circle cx="349.5" cy="564.9" r="6.3" fill="#cc0000" fill-opacity="0.8" stroke="#d00000" stroke-width="1.8"/>
<circle cx="348.4" cy="574.8" r="6.3" fill="#cc0000" fill-opacity="0.8" stroke="#d00000" stroke-width="1.8"/>
<circle cx="354.6" cy="542.6" r="6.3" fill="#cc0000" fill-opacity="0.8" stroke="#d00000" stroke-width="1.8"/>
<circle cx="356.3" cy="550.2" r="6.3" fill="#cc0000" fill-opacity="0.8" stroke="#d00000" stroke-width="1.8"/>
<circle cx="354.6" cy="557.7" r="6.3" fill="#cc0000" fill-opacity="0.8" stroke="#d00000" stroke-width="1.8"/>
<circle cx="357.7" cy="564.2" r="6.3" fill="#cc0000" fill-opacity="0.8" stroke="#d00000" stroke-width="1.8"/>
<circle cx="357.0" cy="574.8" r="6.3" fill="#cc0000" fill-opacity="0.8" stroke="#d00000" stroke-width="1.8"/>
<circle cx="364.4" cy="542.7" r="6.3" fill="#cc0000" fill-opacity="0.8" stroke="#d00000" stroke-width="1.8"/>
<circle cx="362.3" cy="549.6" r="6.3" fill="#cc0000" fill-opacity="0.8" stroke="#d00000" stroke-width="1.8"/>
<circle cx="362.2" cy="556.9" r="6.3" fill="#cc0000" fill-opacity="0.8" stroke="#d00000" stroke-width="1.8"/>
<circle cx="362.1" cy="565.2" r="6.3" fill="#cc0000" fill-opacity="0.8" stroke="#d00000" stroke-width="1.8"/>
<circle cx="365.7" cy="572.8" r="6.3" fill="#cc0000" fill-opacity="0.8" stroke="#d00000" stroke-width="1.8"/>
<circle cx="373.8" cy="539.7" r="6.3" fill="#cc0000" fill-opacity="0.8" stroke="#d00000" stroke-width="1.8"/>
<circle cx="370.7" cy="550.9" r="6.3" fill="#cc0000" fill-opacity="0.8" stroke="#d00000" stroke-width="1.8"/>
<circle cx="371.6" cy="556.3" r="6.3" fill="#cc0000" fill-opacity="0.8" stroke="#d00000" stroke-width="1.8"/>
<circle cx="373.7" cy="563.5" r="6.3" fill="#cc0000" fill-opacity="0.8" stroke="#d00000" stroke-width="1.8"/>
<circle cx="374.0" cy="571.7" r="6.3" fill="#cc0000" fill-opacity="0.8" stroke="#d00000" stroke-width="1.8"/>
<circle cx="380.1" cy="549.4" r="6.3" fill="#cc0000" fill-opacity="0.8" stroke="#d00000" stroke-width="1.8"/>
<circle cx="381.5" cy="557.4" r="6.3" fill="#cc0000" fill-opacity="0.8" stroke="#d00000" stroke-width="1.8"/>
<circle cx="380.6" cy="566.0" r="6.3" fill="#cc0000" fill-opacity="0.8" stroke="#d00000" stroke-width="1.8"/>
<defs>
<linearGradient id="capTop" x1="0" y1="0" x2="0" y2="1"><stop offset="0" stop-color="#8a8a8a"/><stop offset="0.45" stop-color="#5a5a5a"/><stop offset="0.7" stop-color="#000"/><stop offset="1" stop-color="#000"/></linearGradient>
<linearGradient id="capBot" x1="0" y1="0" x2="0" y2="1"><stop offset="0" stop-color="#000"/><stop offset="0.3" stop-color="#000"/><stop offset="0.55" stop-color="#5a5a5a"/><stop offset="1" stop-color="#8a8a8a"/></linearGradient>
<linearGradient id="capL" x1="0" y1="0" x2="1" y2="0"><stop offset="0" stop-color="#8a8a8a"/><stop offset="0.45" stop-color="#6a6a6a"/><stop offset="1" stop-color="#000"/></linearGradient>
<linearGradient id="capR" x1="1" y1="0" x2="0" y2="0"><stop offset="0" stop-color="#8a8a8a"/><stop offset="0.45" stop-color="#6a6a6a"/><stop offset="1" stop-color="#000"/></linearGradient>
</defs>
<defs><linearGradient id="vg" x1="0" y1="0" x2="0" y2="1"><stop offset="0" stop-color="#8c8c8c"/><stop offset="0.33" stop-color="#000"/><stop offset="0.67" stop-color="#000"/><stop offset="1" stop-color="#8c8c8c"/></linearGradient><linearGradient id="hg" x1="0" y1="0" x2="1" y2="0"><stop offset="0" stop-color="#8c8c8c"/><stop offset="0.2" stop-color="#777"/><stop offset="0.36" stop-color="#000"/><stop offset="0.64" stop-color="#000"/><stop offset="0.8" stop-color="#777"/><stop offset="1" stop-color="#8c8c8c"/></linearGradient></defs>
<rect x="64" y="345" width="18" height="54" rx="9" fill="url(#vg)"/>
<rect x="55" y="363" width="36" height="18" rx="9" fill="url(#hg)"/>
<rect x="64" y="358" width="18" height="28" fill="#000"/>
<path d="M59.5,372 L68.5,367 L68.5,377Z" fill="#fff"/>
<path d="M86.5,372 L77.5,367 L77.5,377Z" fill="#fff"/>
<path d="M67.8,385.5 L78.5,385.5 L73.1,395Z" fill="#fff"/>
<path d="M73,349 L68,357 L78,357Z" fill="#fff"/>
<rect x="64" y="420" width="18" height="180" fill="#222" fill-opacity="0.38"/>
<rect x="72.3" y="420" width="1.6" height="178" fill="#e8e8e8"/>
<rect x="65.5" y="421.7" width="15" height="1.3" fill="#d8d8d8" fill-opacity="0.9"/><rect x="65.5" y="423.0" width="15" height="1" fill="#222" fill-opacity="0.55"/>
<rect x="65.5" y="432.6" width="15" height="1.3" fill="#d8d8d8" fill-opacity="0.9"/><rect x="65.5" y="433.9" width="15" height="1" fill="#222" fill-opacity="0.55"/>
<rect x="65.5" y="443.6" width="15" height="1.3" fill="#d8d8d8" fill-opacity="0.9"/><rect x="65.5" y="444.9" width="15" height="1" fill="#222" fill-opacity="0.55"/>
<rect x="65.5" y="454.6" width="15" height="1.3" fill="#d8d8d8" fill-opacity="0.9"/><rect x="65.5" y="455.9" width="15" height="1" fill="#222" fill-opacity="0.55"/>
<rect x="65.5" y="465.5" width="15" height="1.3" fill="#d8d8d8" fill-opacity="0.9"/><rect x="65.5" y="466.8" width="15" height="1" fill="#222" fill-opacity="0.55"/>
<rect x="65.5" y="476.4" width="15" height="1.3" fill="#d8d8d8" fill-opacity="0.9"/><rect x="65.5" y="477.8" width="15" height="1" fill="#222" fill-opacity="0.55"/>
<rect x="65.5" y="487.4" width="15" height="1.3" fill="#d8d8d8" fill-opacity="0.9"/><rect x="65.5" y="488.7" width="15" height="1" fill="#222" fill-opacity="0.55"/>
<rect x="65.5" y="498.3" width="15" height="1.3" fill="#d8d8d8" fill-opacity="0.9"/><rect x="65.5" y="499.6" width="15" height="1" fill="#222" fill-opacity="0.55"/>
<rect x="65.5" y="509.3" width="15" height="1.3" fill="#d8d8d8" fill-opacity="0.9"/><rect x="65.5" y="510.6" width="15" height="1" fill="#222" fill-opacity="0.55"/>
<rect x="65.5" y="520.2" width="15" height="1.3" fill="#d8d8d8" fill-opacity="0.9"/><rect x="65.5" y="521.5" width="15" height="1" fill="#222" fill-opacity="0.55"/>
<rect x="65.5" y="531.2" width="15" height="1.3" fill="#d8d8d8" fill-opacity="0.9"/><rect x="65.5" y="532.5" width="15" height="1" fill="#222" fill-opacity="0.55"/>
<rect x="65.5" y="542.1" width="15" height="1.3" fill="#d8d8d8" fill-opacity="0.9"/><rect x="65.5" y="543.4" width="15" height="1" fill="#222" fill-opacity="0.55"/>
<rect x="65.5" y="553.1" width="15" height="1.3" fill="#d8d8d8" fill-opacity="0.9"/><rect x="65.5" y="554.4" width="15" height="1" fill="#222" fill-opacity="0.55"/>
<rect x="65.5" y="564.0" width="15" height="1.3" fill="#d8d8d8" fill-opacity="0.9"/><rect x="65.5" y="565.4" width="15" height="1" fill="#222" fill-opacity="0.55"/>
<rect x="65.5" y="575.0" width="15" height="1.3" fill="#d8d8d8" fill-opacity="0.9"/><rect x="65.5" y="576.3" width="15" height="1" fill="#222" fill-opacity="0.55"/>
<rect x="65.5" y="585.9" width="15" height="1.3" fill="#d8d8d8" fill-opacity="0.9"/><rect x="65.5" y="587.2" width="15" height="1" fill="#222" fill-opacity="0.55"/>
<rect x="65.5" y="596.9" width="15" height="1.3" fill="#d8d8d8" fill-opacity="0.9"/><rect x="65.5" y="598.2" width="15" height="1" fill="#222" fill-opacity="0.55"/>
<path d="M64,413 A9,9 0 0 1 82,413 L82,422 L64,422Z" fill="url(#capTop)"/>
<rect x="68" y="412.8" width="10" height="2.6" fill="#fff"/><rect x="71.7" y="409" width="2.6" height="10" fill="#fff"/>
<path d="M64,598 L82,598 L82,606.5 A9,9 0 0 1 64,606.5Z" fill="url(#capBot)"/>
<rect x="70" y="604" width="6.5" height="2.4" fill="#fff"/>
<rect x="63.2" y="467.3" width="19.5" height="8" rx="3" fill="#4a4a4a" stroke="#333" stroke-width="0.6"/>
<rect x="69" y="470.3" width="8" height="2.2" fill="#fff"/>
<text x="51" y="340.5" font-size="7" fill="#666" letter-spacing="0.3">POWERED BY</text>
<g font-family="'Liberation Serif',serif" font-size="20" style="filter:drop-shadow(0.6px 0.8px 0.4px rgba(0,0,0,0.35))">
<text x="49.7" y="359.5" fill="#2c66dd" stroke="#2c66dd" stroke-width="0.6">G</text><text x="64" y="359.5" fill="#e02a1a" stroke="#e02a1a" stroke-width="0.6">o</text><text x="74" y="359.5" fill="#f1b400" stroke="#f1b400" stroke-width="0.6">o</text><text x="84" y="359.5" fill="#2c66dd" stroke="#2c66dd" stroke-width="0.6">g</text><text x="94" y="359.5" fill="#1e9c2c" stroke="#1e9c2c" stroke-width="0.6">l</text><text x="99.5" y="359.5" fill="#e02a1a" stroke="#e02a1a" stroke-width="0.6">e</text></g>
<text x="46.5" y="347" font-size="11" fill="#111">Map data ©2009 E</text>
<text x="49" y="347" font-size="11" fill="#111">Imagery ©2009 E</text>
<text x="130.6" y="347" font-size="11" fill="#111">Europa Technologies - <tspan fill="#7b7bd0">Terms of Use</tspan></text>
<text x="46" y="347" font-size="11" fill="#3c64b8" fill-opacity="0.8">Terms of Use</text>
<path d="M622,370 L611.2,370 A8.8,8.8 0 0 0 611.2,387.6 L622,387.6Z" fill="#00007a"/><rect x="607" y="377.7" width="10.2" height="2.7" fill="#fff"/><rect x="610.75" y="374" width="2.7" height="10.2" fill="#fff"/>
</g></svg></div>
<div class="r" style="left:46px;top:336px;width:575px;height:367px;background:transparent;border:1px solid #c6c6c6;box-sizing:border-box;"></div>
</body></html>
